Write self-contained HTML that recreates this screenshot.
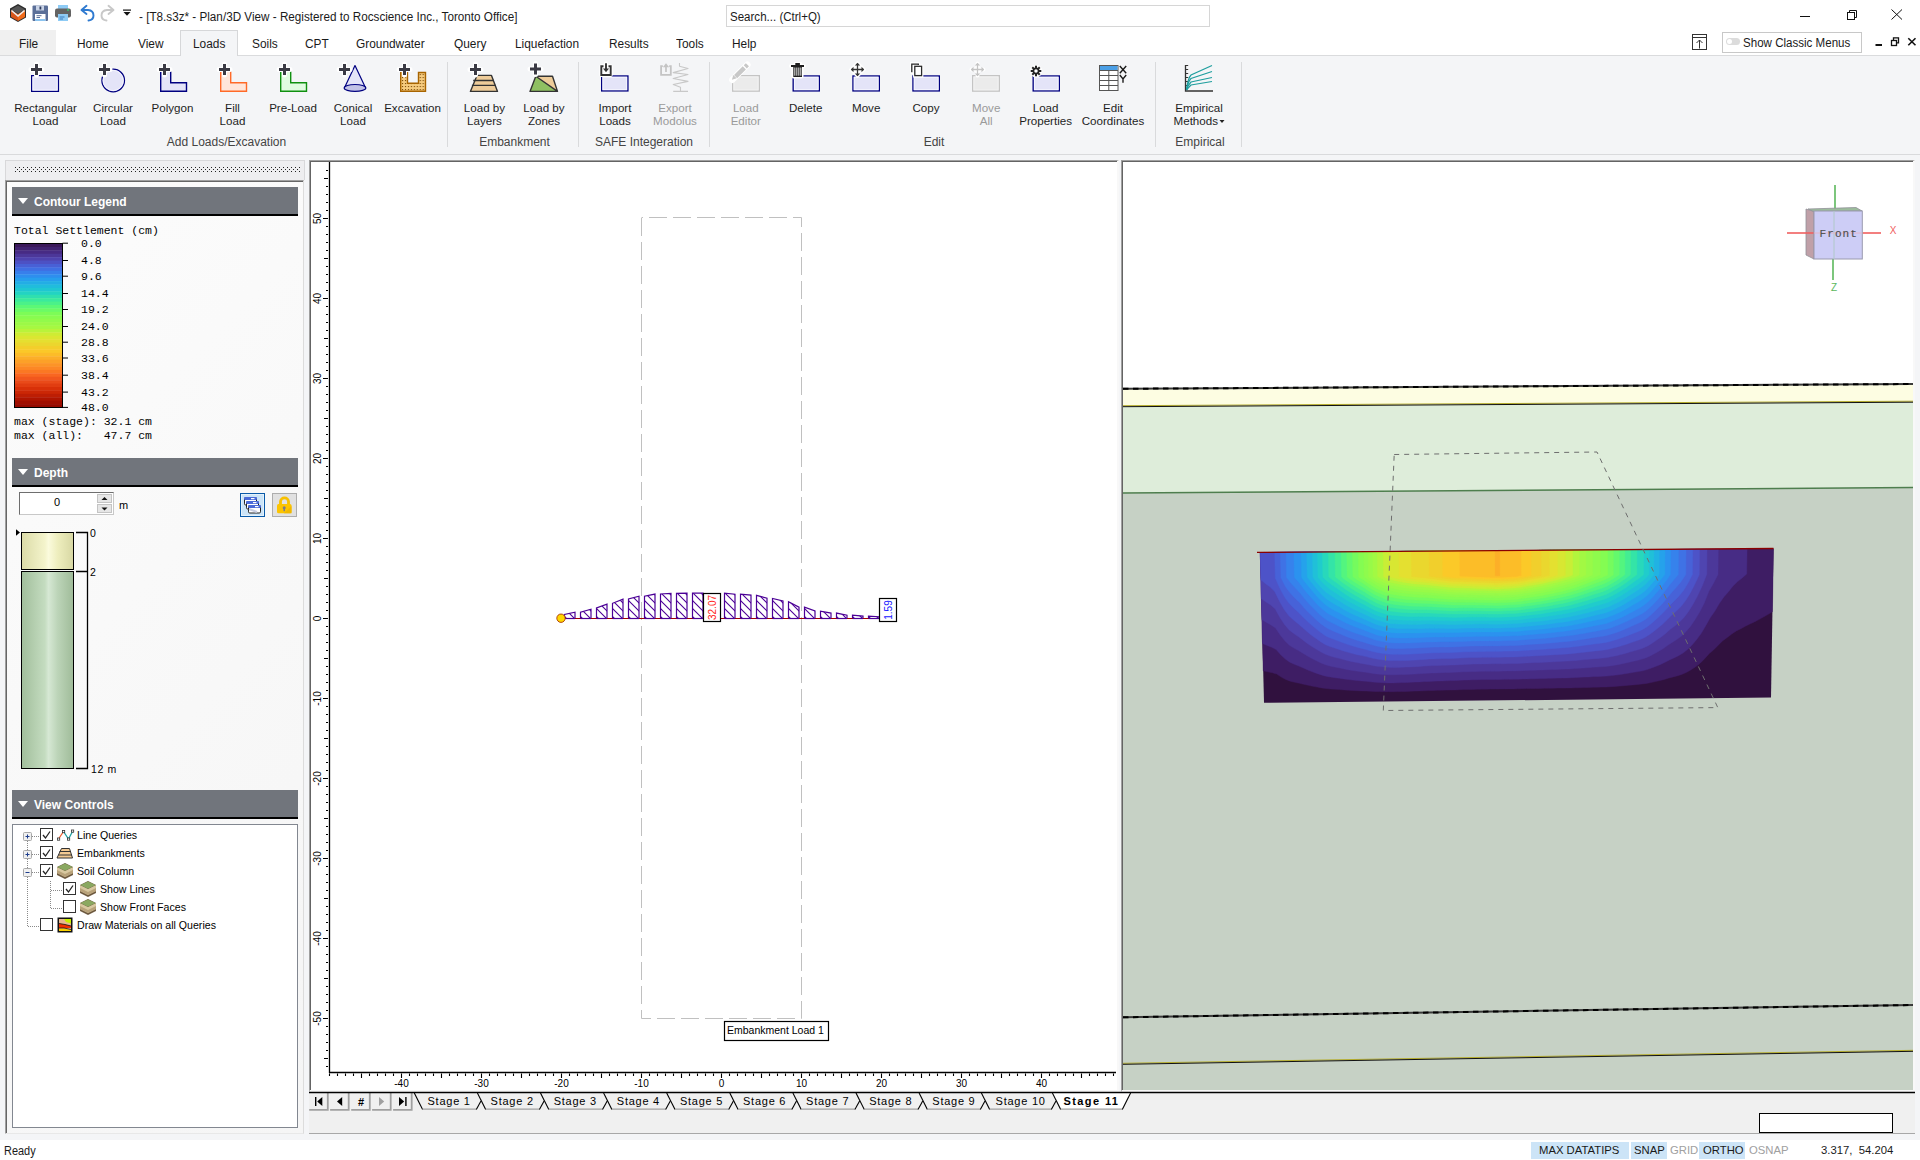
<!DOCTYPE html>
<html><head><meta charset="utf-8">
<style>
*{box-sizing:border-box}
html,body{margin:0;padding:0}
body{width:1920px;height:1160px;position:relative;overflow:hidden;background:#f4f5f7;font-family:"Liberation Sans",sans-serif;font-size:12px;color:#000}
.a{position:absolute}
.t{position:absolute;white-space:nowrap;line-height:1}
svg{position:absolute;overflow:visible}
.rb{position:absolute;text-align:center;font-size:11.6px;line-height:12.5px;color:#1e1e1e;white-space:nowrap}
.dis{color:#9a9a9a}
.gl{position:absolute;font-size:12px;color:#444;white-space:nowrap;line-height:1}
.hdr{position:absolute;left:12px;width:286px;height:29px;background:#71757c;border-bottom:2px solid #000;color:#fff;font-weight:bold;font-size:12px}
.hdr .tri{position:absolute;left:6px;top:11px;width:0;height:0;border-left:5px solid transparent;border-right:5px solid transparent;border-top:6px solid #fff}
.hdr span{position:absolute;left:22px;top:9px;line-height:1}
.mono{font-family:"Liberation Mono",monospace;font-size:11.5px}
</style></head><body>

<!-- TITLE BAR -->
<div class="a" id="title" style="left:0;top:0;width:1920px;height:30px;background:#fff">
 <svg width="140" height="30" style="left:0;top:0">
  <!-- app cube -->
  <polygon points="18,4 26,8.5 26,17.5 18,22 10,17.5 10,8.5" fill="#2b2b2b"/>
  <polygon points="18,5.5 25,9.5 18,13.5 11,9.5" fill="#555"/>
  <polygon points="11,10 18,14 18,21 11,17" fill="#d9561a"/>
  <polygon points="25,10 18,14 18,21 25,17" fill="#f06a1a"/>
  <polyline points="11.5,10.5 18,16 24.5,10.5" fill="none" stroke="#eee" stroke-width="1.6"/>
  <!-- save -->
  <rect x="32.5" y="5.5" width="15.5" height="15.5" rx="1" fill="#5b6f98"/>
  <rect x="36" y="5.5" width="8" height="5" fill="#c9d3e6"/>
  <rect x="39.5" y="6.5" width="1.8" height="3" fill="#2c3a5c"/>
  <rect x="35" y="14" width="10.5" height="7" fill="#fff"/>
  <rect x="35" y="19" width="10.5" height="2" fill="#8cc4f0"/>
  <rect x="36.5" y="15.2" width="5" height="1" fill="#5b6f98"/><rect x="36.5" y="17" width="3.5" height="1" fill="#5b6f98"/>
  <!-- printer -->
  <rect x="58" y="5" width="10" height="4" fill="#8ecbf5"/>
  <rect x="55" y="8.5" width="16" height="9" rx="2" fill="#636363"/>
  <circle cx="68" cy="10" r="0.9" fill="#36d07a"/>
  <rect x="58" y="14" width="10" height="7" fill="#8ecbf5"/>
  <rect x="59.5" y="16.5" width="5" height="1" fill="#3a7fc0"/><rect x="59.5" y="18.5" width="3.5" height="1" fill="#3a7fc0"/>
  <!-- undo -->
  <path d="M81.5,10 L86.5,5.8 M81.5,10 L86.5,14 M82,10 L88,10 Q93.5,10.5 93.5,15.5 Q93.5,20 88.5,20.5" fill="none" stroke="#2f7ad0" stroke-width="1.9" stroke-linecap="round"/>
  <!-- redo -->
  <path d="M113.5,10 L108.5,5.8 M113.5,10 L108.5,14 M113,10 L107,10 Q101.5,10.5 101.5,15.5 Q101.5,20 106.5,20.5" fill="none" stroke="#c8c8c8" stroke-width="1.9" stroke-linecap="round"/>
  <!-- qat dropdown -->
  <rect x="123" y="9.5" width="8" height="1.2" fill="#111"/>
  <polygon points="123.5,12 130.5,12 127,15.8" fill="#111"/>
 </svg>
 <div class="t" style="left:139px;top:10.5px;font-size:12.5px;color:#1a1a1a;transform:scaleX(0.936);transform-origin:0 0">- [T8.s3z* - Plan/3D View - Registered to Rocscience Inc., Toronto Office]</div>
 <div class="a" style="left:726px;top:5px;width:484px;height:22px;background:#fff;border:1px solid #d6d6d6"></div>
 <div class="t" style="left:730px;top:10.5px;font-size:12.5px;color:#1a1a1a;transform:scaleX(0.923);transform-origin:0 0">Search... (Ctrl+Q)</div>
 <svg width="120" height="30" style="left:1790px;top:0">
  <rect x="10" y="16" width="10" height="1" fill="#111"/>
  <rect x="57.5" y="12.5" width="7" height="7" fill="none" stroke="#111" stroke-width="1"/>
  <path d="M59.5,12.5 V10.5 H66.5 V17.5 H64.5" fill="none" stroke="#111" stroke-width="1"/>
  <path d="M101.5,9.5 L112,19.5 M112,9.5 L101.5,19.5" stroke="#111" stroke-width="1"/>
 </svg>
</div>
<!-- MENU BAR -->
<div class="a" id="menu" style="left:0;top:30px;width:1920px;height:26px;background:#fff;border-bottom:1px solid #dadbdd">
 <div class="a" style="left:0;top:0;width:56px;height:25px;background:#f0f0f0"></div>
 <div class="a" style="left:180px;top:0;width:58px;height:26px;background:#f4f5f7;border:1px solid #d6d7d9;border-bottom:none"></div>
 <div class="t" style="left:19px;top:7.5px;font-size:12.5px;color:#1a1a1a;transform:scaleX(0.95);transform-origin:0 0">File</div>
 <div class="t" style="left:77px;top:7.5px;font-size:12.5px;color:#1a1a1a;transform:scaleX(0.95);transform-origin:0 0">Home</div>
 <div class="t" style="left:138px;top:7.5px;font-size:12.5px;color:#1a1a1a;transform:scaleX(0.95);transform-origin:0 0">View</div>
 <div class="t" style="left:193px;top:7.5px;font-size:12.5px;color:#1a1a1a;transform:scaleX(0.95);transform-origin:0 0">Loads</div>
 <div class="t" style="left:252px;top:7.5px;font-size:12.5px;color:#1a1a1a;transform:scaleX(0.95);transform-origin:0 0">Soils</div>
 <div class="t" style="left:305px;top:7.5px;font-size:12.5px;color:#1a1a1a;transform:scaleX(0.95);transform-origin:0 0">CPT</div>
 <div class="t" style="left:356px;top:7.5px;font-size:12.5px;color:#1a1a1a;transform:scaleX(0.95);transform-origin:0 0">Groundwater</div>
 <div class="t" style="left:454px;top:7.5px;font-size:12.5px;color:#1a1a1a;transform:scaleX(0.95);transform-origin:0 0">Query</div>
 <div class="t" style="left:515px;top:7.5px;font-size:12.5px;color:#1a1a1a;transform:scaleX(0.95);transform-origin:0 0">Liquefaction</div>
 <div class="t" style="left:609px;top:7.5px;font-size:12.5px;color:#1a1a1a;transform:scaleX(0.95);transform-origin:0 0">Results</div>
 <div class="t" style="left:676px;top:7.5px;font-size:12.5px;color:#1a1a1a;transform:scaleX(0.95);transform-origin:0 0">Tools</div>
 <div class="t" style="left:732px;top:7.5px;font-size:12.5px;color:#1a1a1a;transform:scaleX(0.95);transform-origin:0 0">Help</div>
 <svg width="30" height="25" style="left:1690px;top:0">
  <rect x="2.5" y="4.5" width="14" height="15" fill="none" stroke="#333" stroke-width="1"/>
  <line x1="2.5" y1="7.5" x2="16.5" y2="7.5" stroke="#333" stroke-width="1"/>
  <path d="M9.5,18.5 V10 M6.5,13 L9.5,10 L12.5,13" fill="none" stroke="#333" stroke-width="1"/>
 </svg>
 <div class="a" style="left:1722px;top:2px;width:140px;height:21px;background:#fff;border:1px solid #c8c8c8"></div>
 <div class="a" style="left:1726px;top:8px;width:14px;height:7px;border-radius:4px;background:#dcdcdc"></div>
 <div class="a" style="left:1727px;top:9px;width:5px;height:5px;border-radius:3px;background:#fff"></div>
 <div class="t" style="left:1743px;top:6.5px;font-size:12.5px;color:#1a1a1a;transform:scaleX(0.925);transform-origin:0 0">Show Classic Menus</div>
 <svg width="50" height="25" style="left:1870px;top:0">
  <rect x="5.5" y="14" width="6.5" height="2" fill="#111"/>
  <rect x="21.5" y="10.5" width="5" height="5" fill="none" stroke="#111" stroke-width="1.3"/>
  <path d="M23.5,10 V7.8 H28.5 V12.8 H27" fill="none" stroke="#111" stroke-width="1.3"/>
  <path d="M38.3,8.3 L45.5,15.3 M45.5,8.3 L38.3,15.3" stroke="#111" stroke-width="1.6"/>
 </svg>
</div>
<!-- RIBBON -->
<div class="a" id="ribbon" style="left:0;top:56px;width:1920px;height:99px;background:#f4f5f7;border-bottom:1px solid #d9dadc"></div>
<svg id="ribsvg" width="1920" height="160" style="left:0;top:0"><rect x="31.7" y="75.7" width="26.700000000000003" height="15.6" fill="#e4e4f8" stroke="#000080" stroke-width="1.4"/><rect x="32.9" y="76.9" width="24.3" height="13.2" fill="none" stroke="#f6f6fe" stroke-width="1"/><path d="M31.0,69.5 H42.0 M36.5,64.0 V75.0" fill="none" stroke="#fff" stroke-linejoin="round" stroke-linecap="round" stroke-width="5"/><path d="M31.0,69.5 H42.0 M36.5,64.0 V75.0" fill="none" stroke="#3a3a44" stroke-width="3"/>
<circle cx="113.2" cy="80.5" r="11.3" fill="#e4e4f8" stroke="#000080" stroke-width="1.25"/><circle cx="113.2" cy="80.5" r="10.1" fill="none" stroke="#f6f6fe" stroke-width="0.9"/><path d="M99.0,69.5 H110.0 M104.5,64.0 V75.0" fill="none" stroke="#fff" stroke-linejoin="round" stroke-linecap="round" stroke-width="5"/><path d="M99.0,69.5 H110.0 M104.5,64.0 V75.0" fill="none" stroke="#3a3a44" stroke-width="3"/>
<path d="M160.7,70.5 V91.3 H186.5 V82.7 H170.7 V70.5 Z" fill="#e4e4f8" stroke="#000080" stroke-width="1.4" stroke-linejoin="miter"/><path d="M159.0,69.5 H170.0 M164.5,64.0 V75.0" fill="none" stroke="#fff" stroke-linejoin="round" stroke-linecap="round" stroke-width="5"/><path d="M159.0,69.5 H170.0 M164.5,64.0 V75.0" fill="none" stroke="#3a3a44" stroke-width="3"/>
<path d="M220.7,70.5 V91.3 H246.5 V82.7 H230.7 V70.5 Z" fill="#ffe6da" stroke="#ff6a28" stroke-width="1.4" stroke-linejoin="miter"/><path d="M219.0,69.5 H230.0 M224.5,64.0 V75.0" fill="none" stroke="#fff" stroke-linejoin="round" stroke-linecap="round" stroke-width="5"/><path d="M219.0,69.5 H230.0 M224.5,64.0 V75.0" fill="none" stroke="#3a3a44" stroke-width="3"/>
<path d="M280.7,70.5 V91.3 H306.5 V82.7 H290.7 V70.5 Z" fill="#e0fce0" stroke="#109010" stroke-width="1.4" stroke-linejoin="miter"/><path d="M279.0,69.5 H290.0 M284.5,64.0 V75.0" fill="none" stroke="#fff" stroke-linejoin="round" stroke-linecap="round" stroke-width="5"/><path d="M279.0,69.5 H290.0 M284.5,64.0 V75.0" fill="none" stroke="#3a3a44" stroke-width="3"/>
<path d="M355,65.5 L344.6,87.5 L365.4,87.5 Z" fill="#e4e4f8" stroke="#000080" stroke-width="1.2" stroke-linejoin="round"/><ellipse cx="355" cy="87.9" rx="10.8" ry="3.4" fill="#c2c2e6" stroke="#000080" stroke-width="1.2"/><path d="M339.0,69.5 H350.0 M344.5,64.0 V75.0" fill="none" stroke="#fff" stroke-linejoin="round" stroke-linecap="round" stroke-width="5"/><path d="M339.0,69.5 H350.0 M344.5,64.0 V75.0" fill="none" stroke="#3a3a44" stroke-width="3"/>
<defs><pattern id="dots" x="401" y="73" width="2.95" height="3" patternUnits="userSpaceOnUse"><rect width="3" height="3" fill="#f6cb7e"/><rect x="1" y="1" width="1.1" height="1.1" fill="#7a4a08"/></pattern></defs><path d="M400.7,70.5 V91.3 H425.5 V72.5 H418.5 V83.2 H407.5 V70.5 Z" fill="url(#dots)" stroke="#a86400" stroke-width="1.4"/><path d="M399.0,69.5 H410.0 M404.5,64.0 V75.0" fill="none" stroke="#fff" stroke-linejoin="round" stroke-linecap="round" stroke-width="5"/><path d="M399.0,69.5 H410.0 M404.5,64.0 V75.0" fill="none" stroke="#3a3a44" stroke-width="3"/>
<line x1="447.5" y1="62" x2="447.5" y2="147" stroke="#d9dadc" stroke-width="1"/>
<line x1="578.5" y1="62" x2="578.5" y2="147" stroke="#d9dadc" stroke-width="1"/>
<line x1="709.5" y1="62" x2="709.5" y2="147" stroke="#d9dadc" stroke-width="1"/>
<line x1="1155.5" y1="62" x2="1155.5" y2="147" stroke="#d9dadc" stroke-width="1"/>
<line x1="1241.5" y1="62" x2="1241.5" y2="147" stroke="#d9dadc" stroke-width="1"/>
<path d="M477,75.4 H491.5 L497.5,91.4 H470.4 Z" fill="#eecc9a" stroke="#333" stroke-width="1.4" stroke-linejoin="round"/><path d="M473.2,80.5 H494 M471.9,85.4 H495.8" stroke="#333" stroke-width="1.4"/><path d="M470.0,69.5 H481.0 M475.5,64.0 V75.0" fill="none" stroke="#fff" stroke-linejoin="round" stroke-linecap="round" stroke-width="5"/><path d="M470.0,69.5 H481.0 M475.5,64.0 V75.0" fill="none" stroke="#3a3a44" stroke-width="3"/>
<path d="M535.8,76.2 L557.5,91.4 H530 Z" fill="#8fc062"/><path d="M535.8,76.2 H552.5 L557.5,91.4 Z" fill="#eecc9a"/><path d="M535.8,76.2 H552.5 L557.5,91.4 H530 Z M535.8,76.2 L557.5,91.4" fill="none" stroke="#333" stroke-width="1.4" stroke-linejoin="round"/><path d="M530.0,69 H541.0 M535.5,63.5 V74.5" fill="none" stroke="#fff" stroke-linejoin="round" stroke-linecap="round" stroke-width="5"/><path d="M530.0,69 H541.0 M535.5,63.5 V74.5" fill="none" stroke="#3a3a44" stroke-width="3"/>
<rect x="601.7" y="76.0" width="26.200000000000024" height="14.899999999999997" fill="#e4e4f8" stroke="#000080" stroke-width="1.4"/><rect x="602.9" y="77.2" width="23.800000000000022" height="12.499999999999996" fill="none" stroke="#f6f6fe" stroke-width="1"/><path d="M603.5,66.3 H601.3 V75 H610.7 V66.3 H608.5 M606,63.2 V72" fill="none" stroke="#fff" stroke-width="4" stroke-linejoin="round" stroke-linecap="round"/><path d="M603.5,66.3 H601.3 V75 H610.7 V66.3 H608.5" fill="none" stroke="#333" stroke-width="1.9"/><path d="M606,63.2 V69.5" stroke="#333" stroke-width="1.9"/><path d="M603,68.5 H609 L606,72.3 Z" fill="#333"/>
<path d="M662.8,66.1 H661.1 V74.8 H670.8 V66.1 H669.2" fill="none" stroke="#c4c4c4" stroke-width="1.8"/><path d="M666,72 V66" fill="none" stroke="#c4c4c4" stroke-width="1.7"/><polygon points="662.8,67.3 669.2,67.3 666,63.3" fill="#c4c4c4"/>
<path d="M679.5,63 V66.3 L688,68.5 L673.2,72.6 L688,74.5 L673.2,78.5 L688,81.4 L673.2,84.5 L680.5,87.2 V91.4 M673.2,91.4 H688" fill="none" stroke="#c8c8c8" stroke-width="1.1" stroke-linejoin="round"/>
<rect x="732.7" y="75.7" width="26.6" height="15.399999999999997" fill="#ebebeb" stroke="#c4c4c4" stroke-width="1.4"/><rect x="733.9" y="76.9" width="24.2" height="12.999999999999996" fill="none" stroke="#f2f2f2" stroke-width="1"/>
<path d="M732.3,79.8 L747.4,64.7" fill="none" stroke="#fff" stroke-width="6.4" stroke-linecap="round"/><path d="M735.6,76.6 L744.3,67.9" stroke="#c8c8c8" stroke-width="4.4"/><path d="M745.3,66.9 L747.4,64.8" stroke="#c8c8c8" stroke-width="4.4"/><polygon points="731.9,79.7 733.3,74.9 736.7,78.3" fill="#c8c8c8"/>
<rect x="793.2" y="76.0" width="26.1" height="14.899999999999997" fill="#e4e4f8" stroke="#000080" stroke-width="1.4"/><rect x="794.4" y="77.2" width="23.7" height="12.499999999999996" fill="none" stroke="#f6f6fe" stroke-width="1"/>
<path d="M791,66 H804 M795.5,64 H800.5 V66 M793.5,67 V76.5 H801.5 V67" fill="none" stroke="#fff" stroke-width="4" stroke-linejoin="round" stroke-linecap="round"/>
<rect x="791" y="65" width="13" height="2" fill="#1e1e1e"/><rect x="795.3" y="63" width="4.6" height="2" fill="#1e1e1e"/><rect x="793.3" y="67" width="8.7" height="10" fill="#1e1e1e"/>
<rect x="794.4" y="67.5" width="0.9" height="8.2" fill="#fff"/><rect x="796.4" y="67.5" width="0.9" height="8.2" fill="#fff"/><rect x="798.4" y="67.5" width="0.9" height="8.2" fill="#fff"/><rect x="800.4" y="67.5" width="0.9" height="8.2" fill="#fff"/>
<rect x="853.0" y="76.0" width="26.300000000000047" height="14.899999999999997" fill="#e4e4f8" stroke="#000080" stroke-width="1.4"/><rect x="854.1999999999999" y="77.2" width="23.900000000000045" height="12.499999999999996" fill="none" stroke="#f6f6fe" stroke-width="1"/><path d="M851.5,69.5 H863.5 M857.5,63.5 V75.5" fill="none" stroke="#fff" stroke-width="4" stroke-linecap="round"/><path d="M849.8,69.5 L853.5,65.8 V73.2 Z M865.2,69.5 L861.5,65.8 V73.2 Z M857.5,61.8 L853.8,65.5 H861.2 Z M857.5,77.2 L853.8,73.5 H861.2 Z" fill="#fff" stroke="#fff" stroke-width="1.5"/><path d="M851.5,69.5 H863.5 M857.5,63.5 V75.5" stroke="#333" stroke-width="1.3"/><path d="M850.8,69.5 L853.5,66.8 V72.2 Z M864.2,69.5 L861.5,66.8 V72.2 Z M857.5,62.8 L854.8,65.5 H860.2 Z M857.5,76.2 L854.8,73.5 H860.2 Z" fill="#333"/>
<rect x="913.0" y="76.0" width="26.300000000000047" height="14.899999999999997" fill="#e4e4f8" stroke="#000080" stroke-width="1.4"/><rect x="914.1999999999999" y="77.2" width="23.900000000000045" height="12.499999999999996" fill="none" stroke="#f6f6fe" stroke-width="1"/>
<path d="M911.7,72.5 V63.8 H918.5" fill="none" stroke="#fff" stroke-width="3.5" stroke-linecap="round"/><rect x="914.8" y="66.5" width="6.8" height="9.3" fill="#fff" stroke="#fff" stroke-width="3.5"/>
<path d="M911.8,72.2 V64.2 H918.3 V65" fill="none" stroke="#2a2a2a" stroke-width="1.3"/><rect x="914.8" y="66.3" width="6.8" height="9.3" fill="#fff" stroke="#2a2a2a" stroke-width="1.3"/>
<rect x="972.7" y="75.7" width="26.6" height="15.399999999999997" fill="#ebebeb" stroke="#c4c4c4" stroke-width="1.4"/><rect x="973.9" y="76.9" width="24.2" height="12.999999999999996" fill="none" stroke="#f2f2f2" stroke-width="1"/>
<path d="M971.5,69.5 H983.5 M977.5,63.5 V75.5" fill="none" stroke="#fff" stroke-width="4" stroke-linecap="round"/><path d="M971.5,69.5 H983.5 M977.5,63.5 V75.5" stroke="#c4c4c4" stroke-width="1.3"/><path d="M970.8,69.5 L973.5,66.8 V72.2 Z M984.2,69.5 L981.5,66.8 V72.2 Z M977.5,62.8 L974.8,65.5 H980.2 Z M977.5,76.2 L974.8,73.5 H980.2 Z" fill="#c4c4c4"/>
<rect x="1033.2" y="76.0" width="26.1" height="14.899999999999997" fill="#e4e4f8" stroke="#000080" stroke-width="1.4"/><rect x="1034.4" y="77.2" width="23.7" height="12.499999999999996" fill="none" stroke="#f6f6fe" stroke-width="1"/>
<circle cx="1036" cy="71" r="6.3" fill="#fff"/>
<g transform="translate(1036,71)"><circle r="2.6" fill="#fff" stroke="#222" stroke-width="1.7"/><rect x="-1" y="-5.3" width="2" height="2.3" fill="#222" transform="rotate(0)"/><rect x="-1" y="-5.3" width="2" height="2.3" fill="#222" transform="rotate(45)"/><rect x="-1" y="-5.3" width="2" height="2.3" fill="#222" transform="rotate(90)"/><rect x="-1" y="-5.3" width="2" height="2.3" fill="#222" transform="rotate(135)"/><rect x="-1" y="-5.3" width="2" height="2.3" fill="#222" transform="rotate(180)"/><rect x="-1" y="-5.3" width="2" height="2.3" fill="#222" transform="rotate(225)"/><rect x="-1" y="-5.3" width="2" height="2.3" fill="#222" transform="rotate(270)"/><rect x="-1" y="-5.3" width="2" height="2.3" fill="#222" transform="rotate(315)"/></g>
<rect x="1099.5" y="65.5" width="18.5" height="25" fill="#fff" stroke="#555" stroke-width="1"/><rect x="1100" y="66" width="17.5" height="4.5" fill="#4a9fe6"/><line x1="1099.5" y1="70.5" x2="1118" y2="70.5" stroke="#555" stroke-width="1"/><line x1="1099.5" y1="75.5" x2="1118" y2="75.5" stroke="#555" stroke-width="1"/><line x1="1099.5" y1="80.5" x2="1118" y2="80.5" stroke="#555" stroke-width="1"/><line x1="1099.5" y1="85.5" x2="1118" y2="85.5" stroke="#555" stroke-width="1"/><line x1="1108.8" y1="70.5" x2="1108.8" y2="90.5" stroke="#555" stroke-width="1"/><path d="M1119.8,66 L1126.2,73.3 M1126.2,66 L1119.8,73.3 M1119.8,75 L1123,79 L1126.2,75 M1123,79 V82.8" fill="none" stroke="#1a1a1a" stroke-width="1.4"/>
<path d="M1185.5,65 V91 H1213" fill="none" stroke="#333" stroke-width="1.3"/><line x1="1185.5" y1="65.5" x2="1188.2" y2="65.5" stroke="#333" stroke-width="1"/><line x1="1185.5" y1="69.5" x2="1188.2" y2="69.5" stroke="#333" stroke-width="1"/><line x1="1185.5" y1="73.5" x2="1188.2" y2="73.5" stroke="#333" stroke-width="1"/><line x1="1185.5" y1="77.5" x2="1188.2" y2="77.5" stroke="#333" stroke-width="1"/><line x1="1185.5" y1="81.5" x2="1188.2" y2="81.5" stroke="#333" stroke-width="1"/><line x1="1185.5" y1="85.5" x2="1188.2" y2="85.5" stroke="#333" stroke-width="1"/><path d="M1186.5,90 Q1188,78 1191,75 L1212,65.5" fill="none" stroke="#1e9e9e" stroke-width="1.2"/><path d="M1186.5,90 Q1188,81.5 1191,78.5 L1212,71.5" fill="none" stroke="#1e9e9e" stroke-width="1.2"/><path d="M1186.5,90 Q1188,85 1191,82 L1212,77.5" fill="none" stroke="#1e9e9e" stroke-width="1.2"/><path d="M1186.5,90 Q1188,88 1191,85 L1212,81.5" fill="none" stroke="#1e9e9e" stroke-width="1.2"/>
<polygon points="1219.5,120 1224.5,120 1222,123" fill="#222"/></svg>
<div class="rb" style="left:-4.5px;top:102px;width:100px">Rectangular<br>Load</div>
<div class="rb" style="left:63px;top:102px;width:100px">Circular<br>Load</div>
<div class="rb" style="left:122.5px;top:102px;width:100px">Polygon</div>
<div class="rb" style="left:182.5px;top:102px;width:100px">Fill<br>Load</div>
<div class="rb" style="left:243px;top:102px;width:100px">Pre-Load</div>
<div class="rb" style="left:303px;top:102px;width:100px">Conical<br>Load</div>
<div class="rb" style="left:362.5px;top:102px;width:100px">Excavation</div>
<div class="rb" style="left:434.5px;top:102px;width:100px">Load by<br>Layers</div>
<div class="rb" style="left:494px;top:102px;width:100px">Load by<br>Zones</div>
<div class="rb" style="left:565px;top:102px;width:100px">Import<br>Loads</div>
<div class="rb dis" style="left:625px;top:102px;width:100px">Export<br>Modolus</div>
<div class="rb dis" style="left:695.8px;top:102px;width:100px">Load<br>Editor</div>
<div class="rb" style="left:755.7px;top:102px;width:100px">Delete</div>
<div class="rb" style="left:816.2px;top:102px;width:100px">Move</div>
<div class="rb" style="left:876px;top:102px;width:100px">Copy</div>
<div class="rb dis" style="left:936.2px;top:102px;width:100px">Move<br>All</div>
<div class="rb" style="left:995.5999999999999px;top:102px;width:100px">Load<br>Properties</div>
<div class="rb" style="left:1063px;top:102px;width:100px">Edit<br>Coordinates</div>
<div class="rb" style="left:1149px;top:102px;width:100px">Empirical<br>Methods&nbsp;&nbsp;</div>
<div class="gl" style="top:136px;left:146.5px;width:160px;text-align:center">Add Loads/Excavation</div><div class="gl" style="top:136px;left:434.5px;width:160px;text-align:center">Embankment</div><div class="gl" style="top:136px;left:564px;width:160px;text-align:center">SAFE Integeration</div><div class="gl" style="top:136px;left:854px;width:160px;text-align:center">Edit</div><div class="gl" style="top:136px;left:1120px;width:160px;text-align:center">Empirical</div>

<!-- LEFT PANEL -->
<div class="a" style="left:5px;top:160px;width:300px;height:20px;background:#eeeef0;border-top:1px solid #d8d8da;border-left:1px solid #d8d8da;border-right:1px solid #d8d8da"></div>
<svg width="300" height="10" style="left:0;top:165px"><defs><pattern id="grip" x="15" y="2" width="4" height="4" patternUnits="userSpaceOnUse"><rect x="0" y="0" width="1" height="1" fill="#222"/><rect x="2" y="2" width="1" height="1" fill="#222"/></pattern></defs><rect x="15" y="2" width="286" height="5" fill="url(#grip)"/></svg>
<div class="a" style="left:5px;top:180px;width:299px;height:954px;background:linear-gradient(135deg,#fcfcfc,#f5f5f5);border-top:1px solid #a0a0a0;border-left:1px solid #a0a0a0;border-right:1px solid #dcdcdc;border-bottom:1px solid #e8e8e8;box-shadow:inset 1px 1px 0 #666"></div>
<div class="hdr" style="top:187px"><div class="tri"></div><span>Contour Legend</span></div>
<div class="t mono" style="left:14px;top:225px">Total Settlement (cm)</div>
<svg width="100" height="180" style="left:0;top:235px"><rect x="14.5" y="8.50" width="48" height="3.82" fill="#3b195a"/><rect x="14.5" y="11.92" width="48" height="3.82" fill="#41226f"/><rect x="14.5" y="15.33" width="48" height="3.82" fill="#472b84"/><rect x="14.5" y="18.75" width="48" height="3.82" fill="#4c3799"/><rect x="14.5" y="22.17" width="48" height="3.82" fill="#4f43ae"/><rect x="14.5" y="25.58" width="48" height="3.82" fill="#4d51c4"/><rect x="14.5" y="29.00" width="48" height="3.82" fill="#4860d6"/><rect x="14.5" y="32.42" width="48" height="3.82" fill="#406fe3"/><rect x="14.5" y="35.83" width="48" height="3.82" fill="#387feb"/><rect x="14.5" y="39.25" width="48" height="3.82" fill="#2e8eee"/><rect x="14.5" y="42.67" width="48" height="3.82" fill="#279eed"/><rect x="14.5" y="46.08" width="48" height="3.82" fill="#23ade5"/><rect x="14.5" y="49.50" width="48" height="3.82" fill="#20bcdc"/><rect x="14.5" y="52.92" width="48" height="3.82" fill="#20c7d1"/><rect x="14.5" y="56.33" width="48" height="3.82" fill="#23d3c3"/><rect x="14.5" y="59.75" width="48" height="3.82" fill="#2fdfaf"/><rect x="14.5" y="63.17" width="48" height="3.82" fill="#3bea9c"/><rect x="14.5" y="66.58" width="48" height="3.82" fill="#4bf189"/><rect x="14.5" y="70.00" width="48" height="3.82" fill="#5bf876"/><rect x="14.5" y="73.42" width="48" height="3.82" fill="#6cfa66"/><rect x="14.5" y="76.83" width="48" height="3.82" fill="#7dfc57"/><rect x="14.5" y="80.25" width="48" height="3.82" fill="#88fb50"/><rect x="14.5" y="83.67" width="48" height="3.82" fill="#92fa4b"/><rect x="14.5" y="87.08" width="48" height="3.82" fill="#9cf946"/><rect x="14.5" y="90.50" width="48" height="3.82" fill="#a6f841"/><rect x="14.5" y="93.92" width="48" height="3.82" fill="#b9f33b"/><rect x="14.5" y="97.33" width="48" height="3.82" fill="#ceec34"/><rect x="14.5" y="100.75" width="48" height="3.82" fill="#dbe632"/><rect x="14.5" y="104.17" width="48" height="3.82" fill="#e5df30"/><rect x="14.5" y="107.58" width="48" height="3.82" fill="#ebd62e"/><rect x="14.5" y="111.00" width="48" height="3.82" fill="#f3ce2b"/><rect x="14.5" y="114.42" width="48" height="3.82" fill="#fbc828"/><rect x="14.5" y="117.83" width="48" height="3.82" fill="#fcbc28"/><rect x="14.5" y="121.25" width="48" height="3.82" fill="#fcae28"/><rect x="14.5" y="124.67" width="48" height="3.82" fill="#fca128"/><rect x="14.5" y="128.08" width="48" height="3.82" fill="#fc9427"/><rect x="14.5" y="131.50" width="48" height="3.82" fill="#fc8725"/><rect x="14.5" y="134.92" width="48" height="3.82" fill="#fb7823"/><rect x="14.5" y="138.33" width="48" height="3.82" fill="#f96621"/><rect x="14.5" y="141.75" width="48" height="3.82" fill="#f2571d"/><rect x="14.5" y="145.17" width="48" height="3.82" fill="#e94a19"/><rect x="14.5" y="148.58" width="48" height="3.82" fill="#e13d11"/><rect x="14.5" y="152.00" width="48" height="3.82" fill="#d83008"/><rect x="14.5" y="155.42" width="48" height="3.82" fill="#cb2706"/><rect x="14.5" y="158.83" width="48" height="3.82" fill="#bd1e04"/><rect x="14.5" y="162.25" width="48" height="3.82" fill="#ae1501"/><rect x="14.5" y="165.67" width="48" height="3.82" fill="#a00e00"/><rect x="14.5" y="169.08" width="48" height="3.82" fill="#950a00"/><rect x="14.5" y="8.5" width="48" height="164.0" fill="none" stroke="#000" stroke-width="1"/><line x1="62.5" y1="8.2" x2="68" y2="8.2" stroke="#000" stroke-width="1"/><line x1="62.5" y1="25.5" x2="68" y2="25.5" stroke="#000" stroke-width="1"/><line x1="62.5" y1="41.2" x2="68" y2="41.2" stroke="#000" stroke-width="1"/><line x1="62.5" y1="58.5" x2="68" y2="58.5" stroke="#000" stroke-width="1"/><line x1="62.5" y1="74.5" x2="68" y2="74.5" stroke="#000" stroke-width="1"/><line x1="62.5" y1="91.5" x2="68" y2="91.5" stroke="#000" stroke-width="1"/><line x1="62.5" y1="107.2" x2="68" y2="107.2" stroke="#000" stroke-width="1"/><line x1="62.5" y1="123.0" x2="68" y2="123.0" stroke="#000" stroke-width="1"/><line x1="62.5" y1="140.2" x2="68" y2="140.2" stroke="#000" stroke-width="1"/><line x1="62.5" y1="157.1" x2="68" y2="157.1" stroke="#000" stroke-width="1"/><line x1="62.5" y1="172.4" x2="68" y2="172.4" stroke="#000" stroke-width="1"/></svg>
<div class="t mono" style="left:81px;top:238.0px">0.0</div>
<div class="t mono" style="left:81px;top:255.3px">4.8</div>
<div class="t mono" style="left:81px;top:271.0px">9.6</div>
<div class="t mono" style="left:81px;top:288.3px">14.4</div>
<div class="t mono" style="left:81px;top:304.3px">19.2</div>
<div class="t mono" style="left:81px;top:321.3px">24.0</div>
<div class="t mono" style="left:81px;top:337.0px">28.8</div>
<div class="t mono" style="left:81px;top:352.8px">33.6</div>
<div class="t mono" style="left:81px;top:370.0px">38.4</div>
<div class="t mono" style="left:81px;top:386.9px">43.2</div>
<div class="t mono" style="left:81px;top:402.2px">48.0</div>
<div class="t mono" style="left:14px;top:415.5px;white-space:pre">max (stage): 32.1 cm</div>
<div class="t mono" style="left:14px;top:429.5px;white-space:pre">max (all):   47.7 cm</div>
<div class="hdr" style="top:458px"><div class="tri"></div><span>Depth</span></div>
<div class="a" style="left:19px;top:492px;width:95px;height:23px;background:#fff;border-top:1px solid #6e6e6e;border-left:1px solid #6e6e6e;border-right:1px solid #c8c8c8;border-bottom:1px solid #c8c8c8"></div>
<div class="t" style="left:54px;top:497px;font-size:11px">0</div>
<div class="a" style="left:97px;top:494px;width:15px;height:9px;background:#e6e6e6;border:1px solid #c4c4c4"></div>
<div class="a" style="left:97px;top:504px;width:15px;height:9px;background:#e6e6e6;border:1px solid #c4c4c4"></div>
<svg width="20" height="20" style="left:97px;top:494px"><polygon points="4.5,6 10.5,6 7.5,3" fill="#111"/><polygon points="4.5,13.5 10.5,13.5 7.5,16.5" fill="#111"/></svg>
<div class="t" style="left:119px;top:500px;font-size:11px">m</div>
<div class="a" style="left:240px;top:493px;width:25px;height:24px;background:#cce4f7;border:1.3px solid #0a5aa8;box-shadow:inset 0 0 0 1px #e4f2fc"></div><svg width="26" height="24" style="left:240px;top:493px"><rect x="4.5" y="4.5" width="12" height="7.5" rx="1.2" fill="#fff" stroke="#222" stroke-width="1"/><rect x="4" y="4" width="13" height="3" rx="1.2" fill="#4a6ad8"/><rect x="11" y="5" width="3.5" height="1.2" fill="#fff"/><rect x="6.5" y="8.5" width="12" height="7.5" rx="1.2" fill="#fff" stroke="#222" stroke-width="1"/><rect x="6" y="8" width="13" height="3" rx="1.2" fill="#4a6ad8"/><rect x="13" y="9" width="3.5" height="1.2" fill="#fff"/><rect x="8.5" y="12.5" width="12" height="7.5" rx="1.2" fill="#fff" stroke="#222" stroke-width="1"/><rect x="8" y="12" width="13" height="3" rx="1.2" fill="#4a6ad8"/><rect x="15" y="13" width="3.5" height="1.2" fill="#fff"/><path d="M9,16 L17,19" stroke="#c8cce0" stroke-width="2"/></svg><div class="a" style="left:272px;top:493px;width:25px;height:24px;background:#e1e1e1;border:1.3px solid #adadad"></div><svg width="25" height="24" style="left:272px;top:493px"><path d="M8.5,11.5 V8.5 A4,3.6 0 0 1 16.5,8.5 V11.5" fill="none" stroke="#f8c000" stroke-width="2.8"/><rect x="5" y="11" width="14.5" height="9.2" rx="1.5" fill="#fcc400"/><path d="M12,20.2 L19.5,13 V20.2 Z" fill="#f0b800"/><circle cx="12.2" cy="14.8" r="1.5" fill="#7a7a90"/><rect x="11.5" y="15" width="1.5" height="3.2" fill="#7a7a90"/></svg>
<div class="a" style="left:21px;top:532px;width:53px;height:38px;border:1.5px solid #000;background:linear-gradient(90deg,#dcdca8,#f4f4cc 45%,#fbfbdd 52%,#eeeebe 70%,#d8d8a4)"></div>
<div class="a" style="left:21px;top:571px;width:53px;height:198px;border:1.5px solid #000;background:linear-gradient(90deg,#a2bf9c,#c4dcc0 45%,#d6e8d4 52%,#bcd4b8 70%,#a0bc9a)"></div>
<svg width="40" height="250" style="left:70px;top:525px"><path d="M6,7.5 H17.5 V243.5 H6 M6,46.5 H17.5" fill="none" stroke="#000" stroke-width="1.3"/></svg>
<svg width="10" height="10" style="left:14px;top:527px"><polygon points="2,2.3 6,5.5 2,8.7" fill="#000"/></svg>
<div class="t" style="left:90px;top:527.5px;font-size:10.5px">0</div>
<div class="t" style="left:90px;top:566.5px;font-size:10.5px">2</div>
<div class="t" style="left:91px;top:763.5px;font-size:10.5px;letter-spacing:0.6px">12 m</div>
<div class="hdr" style="top:790px"><div class="tri"></div><span>View Controls</span></div>
<div class="a" style="left:12px;top:824px;width:286px;height:304px;background:#fff;border:1px solid #828790"></div>
<svg width="300" height="120" style="left:0;top:820px"><line x1="27.5" y1="21" x2="27.5" y2="107" stroke="#8a8a8a" stroke-width="1" stroke-dasharray="1,1"/><line x1="50.5" y1="61" x2="50.5" y2="89" stroke="#8a8a8a" stroke-width="1" stroke-dasharray="1,1"/><line x1="32" y1="16.5" x2="40" y2="16.5" stroke="#8a8a8a" stroke-width="1" stroke-dasharray="1,1"/><line x1="32" y1="34.5" x2="40" y2="34.5" stroke="#8a8a8a" stroke-width="1" stroke-dasharray="1,1"/><line x1="32" y1="52.5" x2="40" y2="52.5" stroke="#8a8a8a" stroke-width="1" stroke-dasharray="1,1"/><line x1="51" y1="70.5" x2="63" y2="70.5" stroke="#8a8a8a" stroke-width="1" stroke-dasharray="1,1"/><line x1="51" y1="88.5" x2="63" y2="88.5" stroke="#8a8a8a" stroke-width="1" stroke-dasharray="1,1"/><line x1="28" y1="106.5" x2="40" y2="106.5" stroke="#8a8a8a" stroke-width="1" stroke-dasharray="1,1"/><rect x="23.5" y="12.5" width="8" height="8" rx="1" fill="#f0f0f0" stroke="#a8a8a8"/><line x1="25.5" y1="16.5" x2="29.5" y2="16.5" stroke="#1c3c8c" stroke-width="1"/><line x1="27.5" y1="14.5" x2="27.5" y2="18.5" stroke="#1c3c8c" stroke-width="1"/><rect x="23.5" y="30.5" width="8" height="8" rx="1" fill="#f0f0f0" stroke="#a8a8a8"/><line x1="25.5" y1="34.5" x2="29.5" y2="34.5" stroke="#1c3c8c" stroke-width="1"/><line x1="27.5" y1="32.5" x2="27.5" y2="36.5" stroke="#1c3c8c" stroke-width="1"/><rect x="23.5" y="48.5" width="8" height="8" rx="1" fill="#f0f0f0" stroke="#a8a8a8"/><line x1="25.5" y1="52.5" x2="29.5" y2="52.5" stroke="#1c3c8c" stroke-width="1"/><rect x="40.5" y="8.5" width="12" height="12" fill="#fff" stroke="#333" stroke-width="1"/><path d="M43,15 L45.5,18 L50,11.5" fill="none" stroke="#222" stroke-width="1.3"/><rect x="40.5" y="26.5" width="12" height="12" fill="#fff" stroke="#333" stroke-width="1"/><path d="M43,33 L45.5,36 L50,29.5" fill="none" stroke="#222" stroke-width="1.3"/><rect x="40.5" y="44.5" width="12" height="12" fill="#fff" stroke="#333" stroke-width="1"/><path d="M43,51 L45.5,54 L50,47.5" fill="none" stroke="#222" stroke-width="1.3"/><rect x="63.5" y="62.5" width="12" height="12" fill="#fff" stroke="#333" stroke-width="1"/><path d="M66,69 L68.5,72 L73,65.5" fill="none" stroke="#222" stroke-width="1.3"/><rect x="63.5" y="80.5" width="12" height="12" fill="#fff" stroke="#333" stroke-width="1"/><rect x="40.5" y="98.5" width="12" height="12" fill="#fff" stroke="#333" stroke-width="1"/><path d="M58.5,19 L63.5,11.5" stroke="#f06030" stroke-width="1.3"/><path d="M63.5,11.5 L68.5,19 L72.5,11.5" fill="none" stroke="#20a0a0" stroke-width="1.3"/><rect x="57.5" y="18" width="2.2" height="2.2" fill="#fff" stroke="#333" stroke-width="0.8"/><rect x="62.5" y="10.5" width="2.2" height="2.2" fill="#fff" stroke="#333" stroke-width="0.8"/><rect x="67.5" y="18" width="2.2" height="2.2" fill="#fff" stroke="#333" stroke-width="0.8"/><rect x="71.5" y="10" width="2.2" height="2.2" fill="#fff" stroke="#333" stroke-width="0.8"/><path d="M61.5,28.5 H69.5 L72.5,38 H57 Z" fill="#f2c992" stroke="#333" stroke-width="1"/><path d="M59.5,31.5 H71 M58.3,35 H72" stroke="#333" stroke-width="1"/><polygon points="65,43 73,47 73,55 65,59 57,55 57,47" fill="#6e5a40"/><polygon points="57,47 65,51 73,47 73,53 65,57 57,53" fill="#d8c8a0"/><polygon points="57,50 65,54 73,50 73,53 65,57 57,53" fill="#b8a27a"/><polygon points="65,43.5 72.5,47 65,50.8 57.5,47" fill="#8aa860"/><polygon points="88,61 96,65 96,73 88,77 80,73 80,65" fill="#6e5a40"/><polygon points="80,65 88,69 96,65 96,71 88,75 80,71" fill="#d8c8a0"/><polygon points="80,68 88,72 96,68 96,71 88,75 80,71" fill="#b8a27a"/><polygon points="88,61.5 95.5,65 88,68.8 80.5,65" fill="#8aa860"/><polygon points="88,79 96,83 96,91 88,95 80,91 80,83" fill="#6e5a40"/><polygon points="80,83 88,87 96,83 96,89 88,93 80,89" fill="#d8c8a0"/><polygon points="80,86 88,90 96,86 96,89 88,93 80,89" fill="#b8a27a"/><polygon points="88,79.5 95.5,83 88,86.8 80.5,83" fill="#8aa860"/><rect x="57.5" y="97.5" width="15" height="15" fill="#111"/><rect x="59" y="99" width="12" height="12" fill="#e8b890"/><path d="M64,99 H71 V103.5 L66,102 Z" fill="#c8f000"/><path d="M59,103.5 L65,104.5 L71,106 V108 H59 Z" fill="#f03000"/><path d="M59,103.5 L65,104.5 L71,106" fill="none" stroke="#111" stroke-width="0.8"/><path d="M59,108.5 H64 L71,110 V111 H59 Z" fill="#f8d000"/><path d="M59,108 H64 L71,109.5" fill="none" stroke="#111" stroke-width="0.8"/></svg>
<div class="t" style="left:77px;top:830px;font-size:10.6px">Line Queries</div>
<div class="t" style="left:77px;top:848px;font-size:10.6px">Embankments</div>
<div class="t" style="left:77px;top:866px;font-size:10.6px">Soil Column</div>
<div class="t" style="left:100px;top:884px;font-size:10.6px">Show Lines</div>
<div class="t" style="left:100px;top:902px;font-size:10.6px">Show Front Faces</div>
<div class="t" style="left:77px;top:920px;font-size:10.6px">Draw Materials on all Queries</div>

<!-- PLAN VIEW -->
<div class="a" id="plan" style="left:309px;top:160px;width:810px;height:932px;background:#fff;border-top:1px solid #a0a0a0;border-left:1px solid #a0a0a0;box-shadow:inset 1px 1px 0 #646464;border-right:2px solid #f8f8f8;border-bottom:2px solid #f8f8f8"></div>
<svg width="1920" height="1160" style="left:0;top:0"><defs><pattern id="hatch" x="0" y="4" width="8" height="8" patternUnits="userSpaceOnUse"><path d="M-1,-1 L9,9 M-9,-1 L1,9 M7,-1 L17,9" stroke="#4b0096" stroke-width="1.1"/></pattern><clipPath id="pclip"><rect x="311" y="162" width="806" height="928"/></clipPath></defs><g clip-path="url(#pclip)"><rect x="641.5" y="217.5" width="160" height="801" fill="none" stroke="#c0c0c0" stroke-width="1" stroke-dasharray="18,6" stroke-dashoffset="16.5"/><line x1="329.5" y1="162" x2="329.5" y2="1073" stroke="#000" stroke-width="1.3"/><line x1="329" y1="1072.5" x2="1116" y2="1072.5" stroke="#000" stroke-width="1.3"/><path d="M326,1066.5 H328 M324,1058.5 H328 M326,1050.5 H328 M326,1042.5 H328 M326,1034.5 H328 M326,1026.5 H328 M323,1018.5 H328 M326,1010.5 H328 M326,1002.5 H328 M326,994.5 H328 M326,986.5 H328 M324,978.5 H328 M326,970.5 H328 M326,962.5 H328 M326,954.5 H328 M326,946.5 H328 M323,938.5 H328 M326,930.5 H328 M326,922.5 H328 M326,914.5 H328 M326,906.5 H328 M324,898.5 H328 M326,890.5 H328 M326,882.5 H328 M326,874.5 H328 M326,866.5 H328 M323,858.5 H328 M326,850.5 H328 M326,842.5 H328 M326,834.5 H328 M326,826.5 H328 M324,818.5 H328 M326,810.5 H328 M326,802.5 H328 M326,794.5 H328 M326,786.5 H328 M323,778.5 H328 M326,770.5 H328 M326,762.5 H328 M326,754.5 H328 M326,746.5 H328 M324,738.5 H328 M326,730.5 H328 M326,722.5 H328 M326,714.5 H328 M326,706.5 H328 M323,698.5 H328 M326,690.5 H328 M326,682.5 H328 M326,674.5 H328 M326,666.5 H328 M324,658.5 H328 M326,650.5 H328 M326,642.5 H328 M326,634.5 H328 M326,626.5 H328 M323,618.5 H328 M326,610.5 H328 M326,602.5 H328 M326,594.5 H328 M326,586.5 H328 M324,578.5 H328 M326,570.5 H328 M326,562.5 H328 M326,554.5 H328 M326,546.5 H328 M323,538.5 H328 M326,530.5 H328 M326,522.5 H328 M326,514.5 H328 M326,506.5 H328 M324,498.5 H328 M326,490.5 H328 M326,482.5 H328 M326,474.5 H328 M326,466.5 H328 M323,458.5 H328 M326,450.5 H328 M326,442.5 H328 M326,434.5 H328 M326,426.5 H328 M324,418.5 H328 M326,410.5 H328 M326,402.5 H328 M326,394.5 H328 M326,386.5 H328 M323,378.5 H328 M326,370.5 H328 M326,362.5 H328 M326,354.5 H328 M326,346.5 H328 M324,338.5 H328 M326,330.5 H328 M326,322.5 H328 M326,314.5 H328 M326,306.5 H328 M323,298.5 H328 M326,290.5 H328 M326,282.5 H328 M326,274.5 H328 M326,266.5 H328 M324,258.5 H328 M326,250.5 H328 M326,242.5 H328 M326,234.5 H328 M326,226.5 H328 M323,218.5 H328 M326,210.5 H328 M326,202.5 H328 M326,194.5 H328 M326,186.5 H328 M324,178.5 H328 M326,170.5 H328 M329.5,1073.5 V1076 M337.5,1073.5 V1076 M345.5,1073.5 V1076 M353.5,1073.5 V1076 M361.5,1073.5 V1078 M369.5,1073.5 V1076 M377.5,1073.5 V1076 M385.5,1073.5 V1076 M393.5,1073.5 V1076 M401.5,1073.5 V1078 M409.5,1073.5 V1076 M417.5,1073.5 V1076 M425.5,1073.5 V1076 M433.5,1073.5 V1076 M441.5,1073.5 V1078 M449.5,1073.5 V1076 M457.5,1073.5 V1076 M465.5,1073.5 V1076 M473.5,1073.5 V1076 M481.5,1073.5 V1078 M489.5,1073.5 V1076 M497.5,1073.5 V1076 M505.5,1073.5 V1076 M513.5,1073.5 V1076 M521.5,1073.5 V1078 M529.5,1073.5 V1076 M537.5,1073.5 V1076 M545.5,1073.5 V1076 M553.5,1073.5 V1076 M561.5,1073.5 V1078 M569.5,1073.5 V1076 M577.5,1073.5 V1076 M585.5,1073.5 V1076 M593.5,1073.5 V1076 M601.5,1073.5 V1078 M609.5,1073.5 V1076 M617.5,1073.5 V1076 M625.5,1073.5 V1076 M633.5,1073.5 V1076 M641.5,1073.5 V1078 M649.5,1073.5 V1076 M657.5,1073.5 V1076 M665.5,1073.5 V1076 M673.5,1073.5 V1076 M681.5,1073.5 V1078 M689.5,1073.5 V1076 M697.5,1073.5 V1076 M705.5,1073.5 V1076 M713.5,1073.5 V1076 M721.5,1073.5 V1078 M729.5,1073.5 V1076 M737.5,1073.5 V1076 M745.5,1073.5 V1076 M753.5,1073.5 V1076 M761.5,1073.5 V1078 M769.5,1073.5 V1076 M777.5,1073.5 V1076 M785.5,1073.5 V1076 M793.5,1073.5 V1076 M801.5,1073.5 V1078 M809.5,1073.5 V1076 M817.5,1073.5 V1076 M825.5,1073.5 V1076 M833.5,1073.5 V1076 M841.5,1073.5 V1078 M849.5,1073.5 V1076 M857.5,1073.5 V1076 M865.5,1073.5 V1076 M873.5,1073.5 V1076 M881.5,1073.5 V1078 M889.5,1073.5 V1076 M897.5,1073.5 V1076 M905.5,1073.5 V1076 M913.5,1073.5 V1076 M921.5,1073.5 V1078 M929.5,1073.5 V1076 M937.5,1073.5 V1076 M945.5,1073.5 V1076 M953.5,1073.5 V1076 M961.5,1073.5 V1078 M969.5,1073.5 V1076 M977.5,1073.5 V1076 M985.5,1073.5 V1076 M993.5,1073.5 V1076 M1001.5,1073.5 V1078 M1009.5,1073.5 V1076 M1017.5,1073.5 V1076 M1025.5,1073.5 V1076 M1033.5,1073.5 V1076 M1041.5,1073.5 V1078 M1049.5,1073.5 V1076 M1057.5,1073.5 V1076 M1065.5,1073.5 V1076 M1073.5,1073.5 V1076 M1081.5,1073.5 V1078 M1089.5,1073.5 V1076 M1097.5,1073.5 V1076 M1105.5,1073.5 V1076 M1113.5,1073.5 V1076" stroke="#000" stroke-width="1.1"/><text x="0" y="0" transform="translate(321.3,1018.5) rotate(-90)" text-anchor="middle" font-size="10" font-family="Liberation Sans" fill="#000">-50</text><text x="0" y="0" transform="translate(321.3,938.5) rotate(-90)" text-anchor="middle" font-size="10" font-family="Liberation Sans" fill="#000">-40</text><text x="0" y="0" transform="translate(321.3,858.5) rotate(-90)" text-anchor="middle" font-size="10" font-family="Liberation Sans" fill="#000">-30</text><text x="0" y="0" transform="translate(321.3,778.5) rotate(-90)" text-anchor="middle" font-size="10" font-family="Liberation Sans" fill="#000">-20</text><text x="0" y="0" transform="translate(321.3,698.5) rotate(-90)" text-anchor="middle" font-size="10" font-family="Liberation Sans" fill="#000">-10</text><text x="0" y="0" transform="translate(321.3,618.5) rotate(-90)" text-anchor="middle" font-size="10" font-family="Liberation Sans" fill="#000">0</text><text x="0" y="0" transform="translate(321.3,538.5) rotate(-90)" text-anchor="middle" font-size="10" font-family="Liberation Sans" fill="#000">10</text><text x="0" y="0" transform="translate(321.3,458.5) rotate(-90)" text-anchor="middle" font-size="10" font-family="Liberation Sans" fill="#000">20</text><text x="0" y="0" transform="translate(321.3,378.5) rotate(-90)" text-anchor="middle" font-size="10" font-family="Liberation Sans" fill="#000">30</text><text x="0" y="0" transform="translate(321.3,298.5) rotate(-90)" text-anchor="middle" font-size="10" font-family="Liberation Sans" fill="#000">40</text><text x="0" y="0" transform="translate(321.3,218.5) rotate(-90)" text-anchor="middle" font-size="10" font-family="Liberation Sans" fill="#000">50</text><text x="401.5" y="1087.3" text-anchor="middle" font-size="10" font-family="Liberation Sans" fill="#000">-40</text><text x="481.5" y="1087.3" text-anchor="middle" font-size="10" font-family="Liberation Sans" fill="#000">-30</text><text x="561.5" y="1087.3" text-anchor="middle" font-size="10" font-family="Liberation Sans" fill="#000">-20</text><text x="641.5" y="1087.3" text-anchor="middle" font-size="10" font-family="Liberation Sans" fill="#000">-10</text><text x="721.5" y="1087.3" text-anchor="middle" font-size="10" font-family="Liberation Sans" fill="#000">0</text><text x="801.5" y="1087.3" text-anchor="middle" font-size="10" font-family="Liberation Sans" fill="#000">10</text><text x="881.5" y="1087.3" text-anchor="middle" font-size="10" font-family="Liberation Sans" fill="#000">20</text><text x="961.5" y="1087.3" text-anchor="middle" font-size="10" font-family="Liberation Sans" fill="#000">30</text><text x="1041.5" y="1087.3" text-anchor="middle" font-size="10" font-family="Liberation Sans" fill="#000">40</text><path d="M564.5,618.5 V614.5 L575.0,612.2 V618.5 Z" fill="url(#hatch)" stroke="#4b0096" stroke-width="1.2"/><path d="M580.5,618.5 V612.2 L591.0,609.2 V618.5 Z" fill="url(#hatch)" stroke="#4b0096" stroke-width="1.2"/><path d="M596.5,618.5 V608 L607.0,604.2 V618.5 Z" fill="url(#hatch)" stroke="#4b0096" stroke-width="1.2"/><path d="M612.5,618.5 V603.3 L623.0,599.2 V618.5 Z" fill="url(#hatch)" stroke="#4b0096" stroke-width="1.2"/><path d="M628.5,618.5 V599 L639.0,596.2 V618.5 Z" fill="url(#hatch)" stroke="#4b0096" stroke-width="1.2"/><path d="M644.5,618.5 V596.2 L655.0,594.1 V618.5 Z" fill="url(#hatch)" stroke="#4b0096" stroke-width="1.2"/><path d="M660.5,618.5 V594 L671.0,593.4 V618.5 Z" fill="url(#hatch)" stroke="#4b0096" stroke-width="1.2"/><path d="M676.5,618.5 V593.4 L687.0,593.2 V618.5 Z" fill="url(#hatch)" stroke="#4b0096" stroke-width="1.2"/><path d="M692.5,618.5 V593.2 L703.0,593.2 V618.5 Z" fill="url(#hatch)" stroke="#4b0096" stroke-width="1.2"/><path d="M724.5,618.5 V593.2 L735.0,594.2 V618.5 Z" fill="url(#hatch)" stroke="#4b0096" stroke-width="1.2"/><path d="M740.5,618.5 V594.2 L751.0,595.1 V618.5 Z" fill="url(#hatch)" stroke="#4b0096" stroke-width="1.2"/><path d="M756.5,618.5 V595.3 L767.0,598.1 V618.5 Z" fill="url(#hatch)" stroke="#4b0096" stroke-width="1.2"/><path d="M772.5,618.5 V598.4 L783.0,601 V618.5 Z" fill="url(#hatch)" stroke="#4b0096" stroke-width="1.2"/><path d="M788.5,618.5 V601.7 L799.0,607.2 V618.5 Z" fill="url(#hatch)" stroke="#4b0096" stroke-width="1.2"/><path d="M804.5,618.5 V607.2 L815.0,611 V618.5 Z" fill="url(#hatch)" stroke="#4b0096" stroke-width="1.2"/><path d="M820.5,618.5 V611.2 L831.0,613.1 V618.5 Z" fill="url(#hatch)" stroke="#4b0096" stroke-width="1.2"/><path d="M836.5,618.5 V613.1 L847.0,615.2 V618.5 Z" fill="url(#hatch)" stroke="#4b0096" stroke-width="1.2"/><path d="M852.5,618.5 V615.2 L863.0,616.1 V618.5 Z" fill="url(#hatch)" stroke="#4b0096" stroke-width="1.2"/><path d="M868.5,618.5 V616.1 L879.0,616.7 V618.5 Z" fill="url(#hatch)" stroke="#4b0096" stroke-width="1.2"/><line x1="561" y1="618.5" x2="879" y2="618.5" stroke="#a00000" stroke-width="1.2"/><line x1="564.5" y1="618.5" x2="575.0" y2="618.5" stroke="#4b0096" stroke-width="1.2"/><line x1="580.5" y1="618.5" x2="591.0" y2="618.5" stroke="#4b0096" stroke-width="1.2"/><line x1="596.5" y1="618.5" x2="607.0" y2="618.5" stroke="#4b0096" stroke-width="1.2"/><line x1="612.5" y1="618.5" x2="623.0" y2="618.5" stroke="#4b0096" stroke-width="1.2"/><line x1="628.5" y1="618.5" x2="639.0" y2="618.5" stroke="#4b0096" stroke-width="1.2"/><line x1="644.5" y1="618.5" x2="655.0" y2="618.5" stroke="#4b0096" stroke-width="1.2"/><line x1="660.5" y1="618.5" x2="671.0" y2="618.5" stroke="#4b0096" stroke-width="1.2"/><line x1="676.5" y1="618.5" x2="687.0" y2="618.5" stroke="#4b0096" stroke-width="1.2"/><line x1="692.5" y1="618.5" x2="703.0" y2="618.5" stroke="#4b0096" stroke-width="1.2"/><line x1="724.5" y1="618.5" x2="735.0" y2="618.5" stroke="#4b0096" stroke-width="1.2"/><line x1="740.5" y1="618.5" x2="751.0" y2="618.5" stroke="#4b0096" stroke-width="1.2"/><line x1="756.5" y1="618.5" x2="767.0" y2="618.5" stroke="#4b0096" stroke-width="1.2"/><line x1="772.5" y1="618.5" x2="783.0" y2="618.5" stroke="#4b0096" stroke-width="1.2"/><line x1="788.5" y1="618.5" x2="799.0" y2="618.5" stroke="#4b0096" stroke-width="1.2"/><line x1="804.5" y1="618.5" x2="815.0" y2="618.5" stroke="#4b0096" stroke-width="1.2"/><line x1="820.5" y1="618.5" x2="831.0" y2="618.5" stroke="#4b0096" stroke-width="1.2"/><line x1="836.5" y1="618.5" x2="847.0" y2="618.5" stroke="#4b0096" stroke-width="1.2"/><line x1="852.5" y1="618.5" x2="863.0" y2="618.5" stroke="#4b0096" stroke-width="1.2"/><line x1="868.5" y1="618.5" x2="879.0" y2="618.5" stroke="#4b0096" stroke-width="1.2"/><circle cx="561" cy="618.2" r="4.2" fill="#ffd700" stroke="#a02000" stroke-width="0.8"/><rect x="703.5" y="593.5" width="17" height="28" fill="#fff" stroke="#000" stroke-width="1.2"/><text transform="translate(715.5,607.5) rotate(-90)" text-anchor="middle" font-size="10" font-family="Liberation Sans" fill="#ff1a1a">32.07</text><rect x="879.5" y="598.5" width="17" height="23" fill="#fff" stroke="#000" stroke-width="1.2"/><text transform="translate(891.5,610) rotate(-90)" text-anchor="middle" font-size="10" font-family="Liberation Sans" fill="#2020ff">1.59</text><rect x="724.5" y="1021.5" width="104" height="19" fill="#fff" stroke="#000" stroke-width="1.2"/><text x="727" y="1034.2" font-size="10.5" font-family="Liberation Sans" fill="#000">Embankment Load 1</text></g></svg>

<!-- 3D VIEW -->
<div class="a" id="v3d" style="left:1121px;top:160px;width:794px;height:932px;background:#c8d2c6;border-top:1px solid #a0a0a0;border-left:1px solid #a0a0a0;box-shadow:inset 1px 1px 0 #646464;border-right:2px solid #f8f8f8;border-bottom:2px solid #f8f8f8"></div>
<svg width="1920" height="1160" style="left:0;top:0"><defs><clipPath id="vclip"><rect x="1123" y="162" width="790" height="928"/></clipPath></defs><g clip-path="url(#vclip)"><rect x="1123" y="162" width="791" height="928" fill="#ffffff"/><polygon points="1123,389 1914,384 1914,1090 1123,1090" fill="#c6d1c5"/><polygon points="1123,389 1914,384 1914,402 1123,406.5" fill="#fdfde2"/><polygon points="1123,406.5 1914,402 1914,487.5 1123,493" fill="#deedda"/><line x1="1123" y1="388.8" x2="1914" y2="384" stroke="#3a3a3a" stroke-width="2"/><line x1="1123" y1="388.8" x2="1914" y2="384" stroke="#000" stroke-width="2" stroke-dasharray="5.5,4.5"/><line x1="1123" y1="405.7" x2="1914" y2="401.2" stroke="#b4ac2c" stroke-width="1"/><line x1="1123" y1="406.7" x2="1914" y2="402.2" stroke="#111" stroke-width="1"/><line x1="1123" y1="493" x2="1914" y2="487.5" stroke="#4e7e4e" stroke-width="1.4"/><line x1="1123" y1="1017.3" x2="1914" y2="1005" stroke="#3a3a3a" stroke-width="2"/><line x1="1123" y1="1017.3" x2="1914" y2="1005" stroke="#000" stroke-width="2" stroke-dasharray="5.5,4.5"/><line x1="1123" y1="1063.3" x2="1914" y2="1050.3" stroke="#b4ac2c" stroke-width="1"/><line x1="1123" y1="1064.3" x2="1914" y2="1051.3" stroke="#111" stroke-width="1"/><polygon points="1260.3,552.5 1773.5,548.8 1771,697.6 1264,702.8" fill="#30113e"/>
<polygon points="1260.3,552.5 1773.5,548.8 1772.4,611.7 1767.9,614.5 1763.4,617.1 1758.9,619.6 1754.4,621.9 1749.9,624.0 1745.4,626.2 1740.9,628.7 1736.3,631.0 1731.8,634.0 1727.3,637.5 1722.8,640.7 1718.3,645.2 1713.8,649.8 1709.3,653.6 1704.7,658.7 1700.2,663.2 1695.7,666.7 1691.2,669.7 1686.8,672.2 1682.3,674.2 1677.8,675.7 1673.3,676.9 1668.9,678.0 1664.4,679.4 1660.0,680.5 1655.5,681.6 1651.0,682.6 1646.6,683.4 1642.1,684.0 1637.7,684.5 1633.2,684.9 1628.8,685.3 1624.3,685.7 1619.8,686.1 1615.4,686.4 1610.9,686.7 1606.5,687.0 1602.0,687.1 1597.6,687.2 1593.1,687.3 1588.7,687.4 1584.2,687.6 1579.8,687.7 1575.3,687.8 1570.9,687.9 1566.4,688.0 1562.0,688.1 1557.5,688.1 1553.1,688.2 1548.6,688.3 1544.2,688.3 1539.7,688.4 1535.3,688.5 1530.8,688.5 1526.4,688.6 1521.9,688.7 1517.5,688.8 1513.0,688.9 1508.6,688.9 1504.1,689.0 1499.6,689.0 1495.2,689.1 1490.7,689.1 1486.3,689.2 1481.8,689.2 1477.4,689.3 1472.9,689.4 1468.5,689.5 1464.0,689.6 1459.6,689.7 1455.1,689.9 1450.7,690.0 1446.2,690.1 1441.8,690.2 1437.3,690.3 1432.9,690.5 1428.4,690.6 1424.0,690.8 1419.5,690.9 1415.1,691.1 1410.6,691.2 1406.2,691.4 1401.7,691.5 1397.3,691.6 1392.8,691.7 1388.4,691.7 1383.9,691.7 1379.5,691.6 1375.0,691.5 1370.6,691.3 1366.1,691.0 1361.7,690.9 1357.2,690.7 1352.7,690.5 1348.3,690.2 1343.8,689.9 1339.4,689.6 1334.9,689.3 1330.5,689.0 1326.0,688.5 1321.5,687.9 1317.1,687.1 1312.6,686.2 1308.1,685.3 1303.6,684.3 1299.2,683.2 1294.7,682.3 1290.2,681.2 1285.7,679.4 1281.2,677.1 1276.7,674.1 1272.2,672.8 1267.7,671.8 1263.2,670.8" fill="#3e1d64" stroke="#3e1d64" stroke-width="0.4"/>
<polygon points="1260.3,552.5 1747.1,549.0 1746.7,574.0 1742.2,577.9 1737.6,581.6 1733.0,586.0 1728.5,591.8 1723.9,596.9 1719.3,603.6 1714.8,611.3 1710.2,617.8 1705.6,625.9 1701.1,633.6 1696.5,639.7 1692.0,645.0 1687.5,649.4 1683.0,653.1 1678.5,655.7 1674.0,657.9 1669.5,659.9 1665.0,662.3 1660.6,664.4 1656.1,666.3 1651.6,668.0 1647.1,669.6 1642.7,670.8 1638.2,671.6 1633.7,672.3 1629.3,673.1 1624.8,673.8 1620.3,674.5 1615.9,675.1 1611.4,675.6 1606.9,676.1 1602.5,676.3 1598.0,676.5 1593.5,676.6 1589.1,676.9 1584.6,677.1 1580.2,677.3 1575.7,677.5 1571.2,677.7 1566.8,677.9 1562.3,678.0 1557.9,678.1 1553.4,678.2 1548.9,678.3 1544.5,678.5 1540.0,678.6 1535.6,678.7 1531.1,678.8 1526.6,678.9 1522.2,679.0 1517.7,679.2 1513.3,679.2 1508.8,679.3 1504.3,679.3 1499.9,679.4 1495.4,679.5 1491.0,679.5 1486.5,679.5 1482.0,679.6 1477.6,679.7 1473.1,679.8 1468.7,679.9 1464.2,680.1 1459.7,680.3 1455.3,680.5 1450.8,680.6 1446.4,680.8 1441.9,680.9 1437.4,681.0 1433.0,681.2 1428.5,681.4 1424.1,681.6 1419.6,681.9 1415.2,682.1 1410.7,682.3 1406.2,682.5 1401.8,682.6 1397.3,682.8 1392.9,682.9 1388.4,682.9 1383.9,682.7 1379.5,682.5 1375.0,682.2 1370.5,681.8 1366.1,681.3 1361.6,680.9 1357.1,680.5 1352.7,680.1 1348.2,679.5 1343.7,678.9 1339.3,678.3 1334.8,677.7 1330.3,677.0 1325.8,676.2 1321.3,674.9 1316.8,673.4 1312.3,671.8 1307.8,670.0 1303.3,668.0 1298.8,666.1 1294.3,664.3 1289.8,662.2 1285.3,659.1 1280.7,654.8 1276.1,649.6 1271.6,647.2 1267.1,645.4 1262.5,643.5" fill="#472c85" stroke="#472c85" stroke-width="0.4"/>
<polygon points="1260.3,552.5 1718.3,549.2 1718.0,574.5 1713.4,583.5 1708.9,591.3 1704.3,602.9 1699.7,612.0 1695.1,619.5 1690.6,626.2 1686.1,631.6 1681.6,636.0 1677.1,639.3 1672.6,642.2 1668.1,645.1 1663.7,648.3 1659.2,651.0 1654.7,653.5 1650.2,655.9 1645.8,657.9 1641.3,659.3 1636.9,660.4 1632.4,661.4 1628.0,662.5 1623.5,663.5 1619.0,664.4 1614.6,665.2 1610.1,665.9 1605.7,666.5 1601.2,666.8 1596.8,667.0 1592.4,667.3 1587.9,667.7 1583.5,668.0 1579.0,668.3 1574.6,668.6 1570.1,668.9 1565.7,669.1 1561.2,669.2 1556.8,669.4 1552.3,669.6 1547.9,669.7 1543.4,669.9 1539.0,670.0 1534.5,670.2 1530.1,670.3 1525.6,670.5 1521.2,670.7 1516.7,670.9 1512.3,670.9 1507.9,670.9 1503.4,671.0 1499.0,671.2 1494.5,671.2 1490.1,671.2 1485.6,671.2 1481.2,671.3 1476.7,671.4 1472.3,671.5 1467.8,671.7 1463.4,671.8 1458.9,672.1 1454.5,672.3 1450.1,672.4 1445.6,672.5 1441.2,672.7 1436.7,672.9 1432.3,673.0 1427.8,673.2 1423.4,673.5 1418.9,673.8 1414.5,674.1 1410.1,674.3 1405.6,674.5 1401.2,674.6 1396.7,674.7 1392.3,674.8 1387.8,674.7 1383.4,674.5 1378.9,674.2 1374.5,673.7 1370.0,673.0 1365.6,672.3 1361.1,671.7 1356.6,671.1 1352.2,670.4 1347.7,669.7 1343.3,668.8 1338.8,667.8 1334.3,667.0 1329.8,666.0 1325.4,664.7 1320.9,662.9 1316.4,660.7 1311.9,658.5 1307.4,656.0 1302.9,653.2 1298.4,650.6 1293.9,648.1 1289.3,645.2 1284.8,640.8 1280.2,635.0 1275.5,628.0 1271.0,624.9 1266.5,622.4 1262.0,619.8" fill="#4c389a" stroke="#4c389a" stroke-width="0.4"/>
<polygon points="1260.3,552.5 1707.0,549.3 1706.8,574.2 1702.1,586.3 1697.5,596.1 1692.9,604.5 1688.4,611.7 1683.8,617.8 1679.3,622.2 1674.8,626.0 1670.3,629.3 1665.7,633.4 1661.2,637.0 1656.7,640.1 1652.2,643.2 1647.7,645.9 1643.2,648.0 1638.8,649.5 1634.3,650.8 1629.8,652.1 1625.3,653.4 1620.8,654.6 1616.4,655.7 1611.9,656.6 1607.4,657.5 1602.9,658.0 1598.5,658.4 1594.0,658.7 1589.5,659.2 1585.0,659.6 1580.6,660.0 1576.1,660.4 1571.6,660.8 1567.1,661.1 1562.7,661.3 1558.2,661.5 1553.7,661.8 1549.3,662.0 1544.8,662.2 1540.3,662.4 1535.8,662.6 1531.4,662.7 1526.9,662.9 1522.4,663.2 1518.0,663.4 1513.5,663.5 1509.0,663.6 1504.5,663.7 1500.1,663.8 1495.6,663.8 1491.1,663.8 1486.7,663.9 1482.2,663.9 1477.7,664.0 1473.2,664.1 1468.8,664.3 1464.3,664.4 1459.8,664.7 1455.4,664.9 1450.9,665.1 1446.4,665.2 1442.0,665.3 1437.5,665.5 1433.0,665.6 1428.5,665.8 1424.1,666.1 1419.6,666.4 1415.1,666.7 1410.7,666.9 1406.2,667.1 1401.7,667.3 1397.3,667.4 1392.8,667.4 1388.3,667.3 1383.9,667.0 1379.4,666.6 1374.9,666.0 1370.4,665.1 1365.9,664.2 1361.4,663.4 1356.9,662.6 1352.5,661.7 1348.0,660.7 1343.5,659.6 1339.0,658.3 1334.5,657.2 1330.0,655.9 1325.5,654.3 1321.0,652.0 1316.4,649.3 1311.9,646.5 1307.3,643.4 1302.8,639.9 1298.2,636.6 1293.7,633.4 1289.1,629.9 1284.5,624.5 1279.9,617.5 1275.2,608.9 1270.6,605.0 1266.0,602.0 1261.4,598.7" fill="#4f45b0" stroke="#4f45b0" stroke-width="0.4"/>
<polygon points="1260.3,552.5 1699.6,549.3 1699.3,574.7 1694.7,584.6 1690.1,593.4 1685.5,600.8 1681.0,606.6 1676.4,611.1 1671.9,615.1 1667.3,619.6 1662.8,624.0 1658.3,627.7 1653.7,631.4 1649.2,634.7 1644.7,637.6 1640.2,639.4 1635.7,641.1 1631.2,642.6 1626.7,644.2 1622.2,645.6 1617.7,646.9 1613.2,648.1 1608.7,649.2 1604.2,650.0 1599.7,650.4 1595.2,650.9 1590.7,651.4 1586.2,652.0 1581.7,652.5 1577.2,653.0 1572.7,653.5 1568.2,653.9 1563.8,654.2 1559.3,654.5 1554.8,654.7 1550.3,655.0 1545.8,655.3 1541.3,655.6 1536.8,655.7 1532.3,656.0 1527.8,656.2 1523.3,656.5 1518.9,656.8 1514.4,656.9 1509.9,657.0 1505.4,657.1 1500.9,657.2 1496.4,657.3 1491.9,657.3 1487.4,657.3 1482.9,657.3 1478.4,657.4 1474.0,657.5 1469.5,657.6 1465.0,657.8 1460.5,658.0 1456.0,658.3 1451.5,658.4 1447.0,658.5 1442.5,658.6 1438.0,658.8 1433.6,658.9 1429.1,659.1 1424.6,659.4 1420.1,659.7 1415.6,660.0 1411.1,660.2 1406.6,660.4 1402.2,660.5 1397.7,660.6 1393.2,660.6 1388.7,660.5 1384.2,660.1 1379.7,659.5 1375.2,658.8 1370.7,657.8 1366.2,656.6 1361.7,655.6 1357.2,654.7 1352.6,653.6 1348.1,652.3 1343.6,651.0 1339.1,649.5 1334.6,648.1 1330.0,646.5 1325.5,644.7 1321.0,641.9 1316.4,638.8 1311.8,635.4 1307.3,631.8 1302.7,627.7 1298.1,623.7 1293.5,620.0 1288.9,615.8 1284.3,609.7 1279.6,601.6 1274.8,591.7 1270.2,587.1 1265.6,583.7 1261.0,579.9" fill="#4d53c8" stroke="#4d53c8" stroke-width="0.4"/>
<polygon points="1274.7,552.4 1692.7,549.4 1692.4,574.6 1687.8,583.4 1683.3,590.8 1678.8,596.2 1674.2,600.9 1669.7,605.4 1665.2,610.6 1660.7,615.1 1656.2,619.3 1651.7,623.2 1647.2,626.7 1642.7,629.4 1638.3,631.4 1633.8,633.2 1629.3,635.0 1624.8,636.7 1620.4,638.3 1615.9,639.7 1611.4,641.0 1607.0,642.2 1602.5,642.9 1598.0,643.5 1593.6,644.0 1589.1,644.7 1584.7,645.3 1580.2,645.9 1575.7,646.5 1571.3,647.0 1566.8,647.5 1562.4,647.8 1557.9,648.2 1553.4,648.5 1549.0,648.8 1544.5,649.2 1540.1,649.4 1535.6,649.7 1531.2,649.9 1526.7,650.2 1522.2,650.5 1517.8,650.9 1513.3,650.9 1508.9,651.0 1504.4,651.1 1499.9,651.3 1495.5,651.3 1491.0,651.3 1486.6,651.3 1482.1,651.4 1477.7,651.4 1473.2,651.5 1468.7,651.7 1464.3,651.8 1459.8,652.1 1455.4,652.3 1450.9,652.4 1446.5,652.5 1442.0,652.6 1437.5,652.7 1433.1,652.8 1428.6,653.0 1424.2,653.2 1419.7,653.5 1415.3,653.8 1410.8,654.0 1406.4,654.2 1401.9,654.3 1397.4,654.3 1393.0,654.3 1388.5,654.1 1384.1,653.6 1379.6,652.9 1375.1,652.1 1370.6,650.9 1366.2,649.6 1361.7,648.4 1357.2,647.2 1352.7,646.0 1348.2,644.6 1343.7,643.0 1339.2,641.3 1334.7,639.6 1330.2,637.9 1325.7,635.9 1321.2,632.8 1316.7,629.3 1312.1,625.4 1307.6,621.4 1303.0,616.9 1298.4,612.3 1293.9,608.2 1289.3,603.6 1284.7,597.3 1280.0,588.6 1275.3,578.1" fill="#4762d8" stroke="#4762d8" stroke-width="0.4"/>
<polygon points="1280.3,552.4 1686.0,549.4 1685.8,574.6 1681.2,581.6 1676.6,587.1 1672.1,592.0 1667.6,597.5 1663.0,602.9 1658.5,607.5 1654.0,612.1 1649.5,616.2 1645.0,619.8 1640.5,622.2 1636.0,624.3 1631.5,626.2 1627.0,628.3 1622.5,630.2 1618.0,631.9 1613.6,633.4 1609.1,634.8 1604.6,635.9 1600.1,636.6 1595.6,637.2 1591.2,637.9 1586.7,638.7 1582.2,639.4 1577.7,640.1 1573.3,640.7 1568.8,641.3 1564.3,641.7 1559.8,642.1 1555.4,642.5 1550.9,642.9 1546.4,643.3 1541.9,643.7 1537.5,643.9 1533.0,644.2 1528.5,644.5 1524.1,644.9 1519.6,645.2 1515.1,645.5 1510.6,645.5 1506.2,645.7 1501.7,645.8 1497.2,645.9 1492.7,645.9 1488.3,645.9 1483.8,645.9 1479.3,646.0 1474.9,646.0 1470.4,646.1 1465.9,646.3 1461.4,646.5 1457.0,646.7 1452.5,646.9 1448.0,646.9 1443.5,647.0 1439.1,647.0 1434.6,647.1 1430.1,647.2 1425.7,647.4 1421.2,647.7 1416.7,648.0 1412.2,648.2 1407.8,648.3 1403.3,648.5 1398.8,648.5 1394.4,648.4 1389.9,648.3 1385.4,647.7 1380.9,647.0 1376.4,646.1 1371.9,644.8 1367.4,643.4 1362.9,641.9 1358.4,640.7 1353.9,639.3 1349.4,637.7 1344.9,636.0 1340.4,634.1 1335.9,632.2 1331.4,630.2 1326.9,628.1 1322.3,624.9 1317.8,621.2 1313.2,616.9 1308.6,612.6 1304.0,607.7 1299.4,602.3 1294.8,597.9 1290.2,593.0 1285.6,586.9 1280.9,577.8" fill="#3f72e5" stroke="#3f72e5" stroke-width="0.4"/>
<polygon points="1286.0,552.3 1678.6,549.5 1678.3,574.5 1673.8,580.0 1669.2,585.5 1664.7,591.6 1660.1,596.9 1655.6,601.9 1651.1,606.5 1646.6,610.6 1642.1,613.7 1637.6,616.1 1633.1,618.2 1628.6,620.5 1624.1,622.6 1619.6,624.6 1615.1,626.3 1610.6,627.9 1606.1,629.3 1601.6,630.1 1597.1,630.9 1592.6,631.7 1588.2,632.5 1583.7,633.4 1579.2,634.1 1574.7,634.9 1570.2,635.6 1565.7,636.1 1561.3,636.6 1556.8,637.0 1552.3,637.5 1547.8,637.9 1543.3,638.4 1538.9,638.7 1534.4,639.0 1529.9,639.3 1525.4,639.7 1520.9,640.1 1516.5,640.4 1512.0,640.5 1507.5,640.6 1503.0,640.8 1498.6,641.0 1494.1,640.9 1489.6,640.9 1485.1,640.9 1480.6,640.9 1476.2,641.0 1471.7,641.1 1467.2,641.2 1462.7,641.4 1458.2,641.5 1453.8,641.8 1449.3,641.8 1444.8,641.8 1440.3,641.8 1435.8,641.9 1431.4,642.0 1426.9,642.1 1422.4,642.3 1417.9,642.6 1413.5,642.8 1409.0,642.9 1404.5,643.0 1400.0,643.0 1395.5,642.9 1391.1,642.8 1386.6,642.2 1382.1,641.4 1377.6,640.6 1373.1,639.2 1368.6,637.6 1364.1,635.9 1359.6,634.5 1355.0,633.0 1350.5,631.3 1346.0,629.4 1341.5,627.4 1337.0,625.2 1332.4,623.1 1327.9,620.8 1323.4,617.7 1318.8,613.7 1314.2,609.1 1309.6,604.4 1305.0,599.3 1300.4,593.5 1295.8,588.6 1291.2,583.4 1286.5,577.5" fill="#3682ec" stroke="#3682ec" stroke-width="0.4"/>
<polygon points="1293.9,552.3 1670.6,549.5 1670.4,574.6 1665.8,581.3 1661.2,587.2 1656.7,592.5 1652.1,597.7 1647.6,602.2 1643.0,605.8 1638.5,608.5 1634.0,610.9 1629.4,613.3 1624.9,615.7 1620.4,617.9 1615.9,619.8 1611.3,621.6 1606.8,623.2 1602.3,624.2 1597.8,625.1 1593.3,625.9 1588.8,626.9 1584.3,627.8 1579.8,628.7 1575.2,629.5 1570.7,630.3 1566.2,630.9 1561.7,631.5 1557.2,632.0 1552.7,632.5 1548.2,633.0 1543.7,633.5 1539.2,633.8 1534.7,634.2 1530.2,634.6 1525.7,635.0 1521.1,635.4 1516.6,635.8 1512.1,635.8 1507.6,636.0 1503.1,636.1 1498.6,636.3 1494.1,636.3 1489.6,636.2 1485.1,636.2 1480.6,636.3 1476.1,636.3 1471.6,636.4 1467.1,636.5 1462.6,636.7 1458.1,636.8 1453.5,637.0 1449.0,637.0 1444.5,637.0 1440.0,637.0 1435.5,637.0 1431.0,637.1 1426.5,637.2 1422.0,637.4 1417.5,637.7 1413.0,637.8 1408.5,637.9 1404.0,637.9 1399.5,637.9 1395.0,637.7 1390.4,637.5 1385.9,636.8 1381.4,635.9 1376.9,634.9 1372.4,633.3 1367.8,631.5 1363.3,629.7 1358.7,628.1 1354.2,626.4 1349.7,624.5 1345.1,622.4 1340.5,620.1 1336.0,617.8 1331.4,615.4 1326.9,612.8 1322.3,609.1 1317.7,604.7 1313.0,599.6 1308.4,594.6 1303.8,588.9 1299.1,582.6 1294.5,577.4" fill="#2b92ef" stroke="#2b92ef" stroke-width="0.4"/>
<polygon points="1301.1,552.2 1665.0,549.6 1664.8,574.5 1660.2,580.5 1655.7,586.1 1651.2,591.4 1646.7,596.0 1642.2,599.5 1637.7,602.3 1633.2,604.8 1628.7,607.5 1624.2,609.9 1619.8,612.2 1615.3,614.3 1610.8,616.1 1606.3,617.8 1601.9,618.9 1597.4,619.8 1592.9,620.7 1588.5,621.8 1584.0,622.8 1579.5,623.7 1575.1,624.6 1570.6,625.5 1566.1,626.2 1561.7,626.7 1557.2,627.3 1552.7,627.8 1548.3,628.4 1543.8,628.9 1539.4,629.3 1534.9,629.7 1530.4,630.1 1526.0,630.5 1521.5,631.0 1517.0,631.4 1512.6,631.5 1508.1,631.6 1503.7,631.8 1499.2,632.0 1494.7,632.0 1490.3,631.9 1485.8,631.9 1481.3,631.9 1476.9,632.0 1472.4,632.0 1468.0,632.1 1463.5,632.2 1459.0,632.4 1454.6,632.6 1450.1,632.6 1445.6,632.5 1441.2,632.5 1436.7,632.5 1432.3,632.5 1427.8,632.5 1423.3,632.7 1418.9,632.9 1414.4,633.1 1409.9,633.1 1405.5,633.1 1401.0,633.1 1396.6,632.9 1392.1,632.7 1387.6,632.1 1383.1,631.2 1378.7,630.1 1374.2,628.7 1369.7,626.8 1365.2,624.8 1360.7,623.1 1356.2,621.3 1351.7,619.4 1347.2,617.2 1342.7,614.8 1338.2,612.3 1333.6,609.9 1329.1,607.2 1324.6,604.1 1320.0,599.7 1315.4,594.7 1310.9,589.3 1306.3,583.7 1301.6,577.5" fill="#25a2eb" stroke="#25a2eb" stroke-width="0.4"/>
<polygon points="1306.7,552.2 1659.3,549.6 1659.1,574.5 1654.6,580.4 1650.0,585.8 1645.5,590.6 1641.0,593.9 1636.4,596.8 1631.9,599.5 1627.4,602.3 1622.9,604.9 1618.4,607.3 1613.9,609.4 1609.4,611.4 1604.9,613.0 1600.4,614.1 1595.9,615.1 1591.4,616.2 1586.9,617.3 1582.4,618.4 1577.9,619.4 1573.4,620.3 1568.9,621.2 1564.4,621.9 1559.9,622.5 1555.4,623.1 1550.9,623.7 1546.4,624.3 1541.9,624.9 1537.4,625.3 1533.0,625.7 1528.5,626.2 1524.0,626.6 1519.5,627.1 1515.0,627.4 1510.5,627.5 1506.0,627.7 1501.5,627.9 1497.0,628.0 1492.5,627.9 1488.0,627.9 1483.5,627.9 1479.1,627.9 1474.6,627.9 1470.1,628.0 1465.6,628.1 1461.1,628.2 1456.6,628.4 1452.1,628.5 1447.6,628.4 1443.1,628.3 1438.6,628.2 1434.1,628.2 1429.6,628.2 1425.2,628.3 1420.7,628.4 1416.2,628.6 1411.7,628.6 1407.2,628.6 1402.7,628.6 1398.2,628.4 1393.7,628.1 1389.2,627.7 1384.7,626.7 1380.2,625.6 1375.7,624.2 1371.1,622.3 1366.6,620.2 1362.1,618.2 1357.6,616.3 1353.0,614.3 1348.5,612.0 1343.9,609.6 1339.4,606.8 1334.8,604.2 1330.3,601.4 1325.7,598.4 1321.1,593.9 1316.5,588.8 1311.9,583.0 1307.3,577.3" fill="#21b2e3" stroke="#21b2e3" stroke-width="0.4"/>
<polygon points="1312.4,552.1 1653.9,549.7 1653.7,574.8 1649.2,580.3 1644.7,585.1 1640.2,588.4 1635.7,591.4 1631.2,594.3 1626.7,597.2 1622.2,599.9 1617.8,602.4 1613.3,604.6 1608.8,606.7 1604.3,608.2 1599.8,609.4 1595.4,610.5 1590.9,611.7 1586.4,612.9 1581.9,614.0 1577.5,615.1 1573.0,616.1 1568.5,617.0 1564.1,617.8 1559.6,618.4 1555.1,619.1 1550.7,619.7 1546.2,620.4 1541.7,620.9 1537.3,621.4 1532.8,621.8 1528.3,622.3 1523.9,622.8 1519.4,623.3 1514.9,623.6 1510.5,623.7 1506.0,623.9 1501.5,624.1 1497.1,624.3 1492.6,624.2 1488.1,624.1 1483.6,624.1 1479.2,624.1 1474.7,624.1 1470.2,624.2 1465.8,624.2 1461.3,624.3 1456.8,624.5 1452.4,624.5 1447.9,624.4 1443.4,624.3 1439.0,624.2 1434.5,624.2 1430.0,624.1 1425.6,624.1 1421.1,624.3 1416.6,624.4 1412.2,624.4 1407.7,624.3 1403.2,624.3 1398.8,624.0 1394.3,623.7 1389.8,623.4 1385.3,622.3 1380.8,621.1 1376.4,619.8 1371.9,617.8 1367.3,615.6 1362.8,613.4 1358.3,611.4 1353.8,609.3 1349.3,606.9 1344.8,604.4 1340.3,601.5 1335.7,598.7 1331.2,595.8 1326.7,592.7 1322.1,588.4 1317.5,583.2 1312.9,577.3" fill="#20c0d8" stroke="#20c0d8" stroke-width="0.4"/>
<polygon points="1317.5,552.1 1649.0,549.7 1648.9,574.7 1644.3,579.6 1639.8,583.1 1635.2,586.2 1630.7,589.3 1626.1,592.4 1621.6,595.2 1617.1,597.8 1612.5,600.1 1608.0,602.3 1603.5,603.8 1598.9,605.1 1594.4,606.3 1589.9,607.6 1585.4,608.9 1580.9,610.1 1576.3,611.2 1571.8,612.3 1567.3,613.2 1562.8,614.0 1558.3,614.7 1553.7,615.4 1549.2,616.1 1544.7,616.8 1540.2,617.4 1535.7,617.8 1531.2,618.3 1526.7,618.8 1522.1,619.4 1517.6,619.9 1513.1,620.1 1508.6,620.2 1504.1,620.4 1499.6,620.6 1495.0,620.6 1490.5,620.6 1486.0,620.5 1481.5,620.5 1477.0,620.5 1472.5,620.5 1467.9,620.6 1463.4,620.6 1458.9,620.7 1454.4,620.9 1449.9,620.8 1445.4,620.6 1440.8,620.5 1436.3,620.4 1431.8,620.3 1427.3,620.2 1422.8,620.3 1418.3,620.4 1413.7,620.4 1409.2,620.3 1404.7,620.2 1400.2,620.0 1395.7,619.6 1391.1,619.2 1386.6,618.3 1382.1,617.1 1377.5,615.7 1373.0,613.7 1368.4,611.5 1363.9,608.9 1359.3,606.9 1354.8,604.6 1350.2,602.2 1345.6,599.5 1341.0,596.5 1336.5,593.4 1331.9,590.4 1327.3,587.1 1322.7,582.8 1318.0,577.4" fill="#20cccc" stroke="#20cccc" stroke-width="0.4"/>
<polygon points="1322.4,552.1 1643.7,549.7 1643.5,574.7 1639.0,578.3 1634.4,581.5 1629.9,584.7 1625.4,587.9 1620.9,590.8 1616.3,593.5 1611.8,595.9 1607.3,598.1 1602.8,599.7 1598.3,601.0 1593.8,602.2 1589.3,603.6 1584.8,605.0 1580.3,606.2 1575.7,607.4 1571.2,608.6 1566.7,609.5 1562.2,610.3 1557.7,611.1 1553.2,611.8 1548.7,612.6 1544.2,613.3 1539.7,613.9 1535.2,614.4 1530.7,614.9 1526.2,615.4 1521.7,616.0 1517.2,616.5 1512.7,616.7 1508.2,616.9 1503.7,617.1 1499.2,617.3 1494.7,617.3 1490.2,617.2 1485.7,617.1 1481.2,617.1 1476.7,617.1 1472.2,617.1 1467.7,617.1 1463.2,617.2 1458.7,617.3 1454.2,617.4 1449.7,617.2 1445.2,617.1 1440.7,616.9 1436.2,616.8 1431.7,616.6 1427.2,616.5 1422.7,616.6 1418.2,616.6 1413.7,616.6 1409.2,616.5 1404.7,616.3 1400.2,616.0 1395.7,615.6 1391.2,615.2 1386.7,614.2 1382.1,612.9 1377.6,611.4 1373.1,609.4 1368.5,607.0 1364.0,604.4 1359.4,602.2 1354.9,599.8 1350.3,597.3 1345.8,594.4 1341.2,591.3 1336.6,588.1 1332.1,585.0 1327.5,581.5 1322.9,577.2" fill="#28d8bb" stroke="#28d8bb" stroke-width="0.4"/>
<polygon points="1328.3,552.0 1637.0,549.8 1636.8,574.8 1632.3,578.0 1627.8,581.5 1623.2,584.7 1618.7,587.6 1614.1,590.3 1609.6,592.7 1605.1,594.8 1600.5,596.2 1596.0,597.5 1591.5,599.0 1587.0,600.4 1582.4,601.8 1577.9,603.1 1573.4,604.3 1568.9,605.5 1564.4,606.4 1559.8,607.2 1555.3,608.0 1550.8,608.8 1546.3,609.6 1541.8,610.3 1537.3,610.8 1532.7,611.4 1528.2,611.9 1523.7,612.5 1519.2,613.1 1514.7,613.4 1510.2,613.6 1505.7,613.8 1501.1,614.0 1496.6,614.1 1492.1,614.0 1487.6,613.9 1483.1,613.9 1478.6,613.9 1474.0,613.9 1469.5,613.9 1465.0,613.9 1460.5,613.9 1456.0,614.0 1451.5,614.0 1446.9,613.8 1442.4,613.6 1437.9,613.4 1433.4,613.2 1428.9,613.0 1424.3,613.0 1419.8,613.0 1415.3,613.0 1410.8,612.9 1406.3,612.7 1401.7,612.4 1397.2,612.0 1392.7,611.5 1388.2,610.7 1383.6,609.3 1379.1,607.8 1374.5,605.9 1370.0,603.5 1365.4,600.8 1360.9,598.4 1356.3,595.9 1351.7,593.3 1347.1,590.4 1342.6,587.3 1338.0,583.8 1333.4,580.6 1328.8,577.0" fill="#34e4a7" stroke="#34e4a7" stroke-width="0.4"/>
<polygon points="1335.0,552.0 1630.6,549.8 1630.4,574.8 1625.9,578.3 1621.3,581.5 1616.8,584.5 1612.2,587.1 1607.7,589.6 1603.2,591.4 1598.6,592.9 1594.1,594.3 1589.6,595.8 1585.0,597.3 1580.5,598.8 1576.0,600.1 1571.4,601.3 1566.9,602.5 1562.4,603.4 1557.8,604.2 1553.3,605.1 1548.8,605.9 1544.3,606.7 1539.7,607.3 1535.2,607.9 1530.7,608.5 1526.2,609.1 1521.6,609.7 1517.1,610.3 1512.6,610.4 1508.1,610.6 1503.5,610.8 1499.0,611.1 1494.5,611.0 1490.0,610.9 1485.4,610.9 1480.9,610.8 1476.4,610.8 1471.9,610.8 1467.3,610.8 1462.8,610.8 1458.3,610.8 1453.8,610.9 1449.2,610.7 1444.7,610.5 1440.2,610.2 1435.6,610.0 1431.1,609.8 1426.6,609.6 1422.1,609.6 1417.5,609.6 1413.0,609.5 1408.5,609.3 1403.9,609.0 1399.4,608.6 1394.9,608.0 1390.3,607.5 1385.8,606.2 1381.2,604.7 1376.7,603.0 1372.1,600.6 1367.5,598.0 1363.0,595.1 1358.4,592.7 1353.8,590.0 1349.2,587.1 1344.6,584.0 1340.0,580.5 1335.4,577.0" fill="#43ed93" stroke="#43ed93" stroke-width="0.4"/>
<polygon points="1341.1,551.9 1624.9,549.9 1624.8,574.7 1620.3,578.0 1615.8,581.0 1611.3,583.7 1606.8,586.2 1602.3,587.9 1597.8,589.4 1593.3,590.9 1588.8,592.5 1584.3,594.1 1579.8,595.5 1575.3,596.9 1570.9,598.2 1566.4,599.3 1561.9,600.2 1557.4,601.1 1552.9,602.0 1548.4,602.8 1543.9,603.6 1539.5,604.3 1535.0,604.9 1530.5,605.5 1526.0,606.1 1521.5,606.7 1517.0,607.3 1512.6,607.5 1508.1,607.7 1503.6,607.9 1499.1,608.2 1494.6,608.1 1490.1,608.0 1485.7,608.0 1481.2,607.9 1476.7,607.9 1472.2,607.8 1467.7,607.8 1463.2,607.8 1458.7,607.8 1454.3,607.9 1449.8,607.7 1445.3,607.4 1440.8,607.2 1436.3,606.9 1431.8,606.7 1427.3,606.4 1422.9,606.4 1418.4,606.3 1413.9,606.2 1409.4,605.9 1404.9,605.6 1400.4,605.2 1395.9,604.7 1391.4,604.0 1386.9,603.0 1382.4,601.4 1377.9,599.7 1373.4,597.4 1368.8,594.8 1364.3,591.8 1359.8,589.3 1355.2,586.6 1350.7,583.7 1346.1,580.5 1341.6,577.1" fill="#53f57f" stroke="#53f57f" stroke-width="0.4"/>
<polygon points="1346.8,551.9 1619.3,549.9 1619.2,574.8 1614.6,577.8 1610.1,580.6 1605.6,583.0 1601.0,584.7 1596.5,586.3 1592.0,587.9 1587.4,589.6 1582.9,591.2 1578.4,592.7 1573.8,594.1 1569.3,595.4 1564.8,596.5 1560.3,597.5 1555.7,598.4 1551.2,599.3 1546.7,600.2 1542.2,601.0 1537.7,601.7 1533.1,602.3 1528.6,602.9 1524.1,603.6 1519.6,604.2 1515.0,604.6 1510.5,604.8 1506.0,605.0 1501.5,605.3 1497.0,605.4 1492.4,605.3 1487.9,605.2 1483.4,605.1 1478.9,605.1 1474.3,605.0 1469.8,605.0 1465.3,605.0 1460.8,605.0 1456.3,605.0 1451.7,604.9 1447.2,604.6 1442.7,604.3 1438.2,604.0 1433.6,603.7 1429.1,603.4 1424.6,603.3 1420.1,603.2 1415.5,603.1 1411.0,602.8 1406.5,602.5 1402.0,602.1 1397.4,601.5 1392.9,600.8 1388.3,600.0 1383.8,598.4 1379.2,596.6 1374.7,594.5 1370.1,591.8 1365.5,588.8 1361.0,585.9 1356.4,583.2 1351.8,580.2 1347.2,576.9" fill="#64f96d" stroke="#64f96d" stroke-width="0.4"/>
<polygon points="1352.4,551.8 1613.4,550.0 1613.3,575.0 1608.8,577.7 1604.3,579.9 1599.8,581.7 1595.3,583.3 1590.8,585.0 1586.3,586.7 1581.8,588.3 1577.4,589.9 1572.9,591.3 1568.4,592.6 1563.9,593.7 1559.4,594.7 1554.9,595.7 1550.5,596.6 1546.0,597.5 1541.5,598.3 1537.0,599.0 1532.5,599.6 1528.0,600.3 1523.6,600.9 1519.1,601.6 1514.6,602.0 1510.1,602.2 1505.7,602.4 1501.2,602.6 1496.7,602.8 1492.2,602.7 1487.7,602.6 1483.2,602.5 1478.8,602.4 1474.3,602.3 1469.8,602.3 1465.3,602.2 1460.8,602.2 1456.4,602.2 1451.9,602.1 1447.4,601.8 1442.9,601.5 1438.4,601.2 1433.9,600.9 1429.5,600.5 1425.0,600.3 1420.5,600.2 1416.0,600.1 1411.5,599.8 1407.0,599.4 1402.5,599.0 1398.1,598.4 1393.6,597.7 1389.1,596.9 1384.6,595.2 1380.0,593.5 1375.5,591.4 1371.0,588.7 1366.5,585.7 1361.9,582.6 1357.4,579.9 1352.9,576.8" fill="#75fb5e" stroke="#75fb5e" stroke-width="0.4"/>
<polygon points="1358.3,551.8 1607.7,550.0 1607.7,575.0 1603.1,577.0 1598.6,578.8 1594.1,580.5 1589.5,582.3 1585.0,584.1 1580.5,585.7 1576.0,587.3 1571.4,588.8 1566.9,590.1 1562.4,591.2 1557.9,592.2 1553.4,593.2 1548.8,594.2 1544.3,595.1 1539.8,595.9 1535.3,596.6 1530.8,597.2 1526.3,597.9 1521.7,598.6 1517.2,599.3 1512.7,599.5 1508.2,599.7 1503.7,599.9 1499.2,600.2 1494.7,600.2 1490.1,600.1 1485.6,600.0 1481.1,599.9 1476.6,599.8 1472.1,599.7 1467.5,599.7 1463.0,599.6 1458.5,599.6 1454.0,599.6 1449.5,599.3 1445.0,598.9 1440.4,598.6 1435.9,598.2 1431.4,597.9 1426.9,597.5 1422.3,597.4 1417.8,597.2 1413.3,597.0 1408.8,596.6 1404.3,596.1 1399.7,595.5 1395.2,594.8 1390.7,594.0 1386.1,592.6 1381.6,590.8 1377.0,588.8 1372.5,586.1 1367.9,583.1 1363.3,579.7 1358.7,576.9" fill="#84fc52" stroke="#84fc52" stroke-width="0.4"/>
<polygon points="1363.7,551.8 1600.3,550.0 1600.2,575.0 1595.7,576.7 1591.1,578.6 1586.6,580.5 1582.1,582.2 1577.5,583.9 1573.0,585.4 1568.4,586.9 1563.9,588.1 1559.4,589.2 1554.8,590.2 1550.3,591.2 1545.8,592.2 1541.2,593.1 1536.7,593.8 1532.2,594.5 1527.6,595.2 1523.1,595.9 1518.6,596.6 1514.0,597.0 1509.5,597.2 1505.0,597.4 1500.5,597.7 1495.9,597.8 1491.4,597.6 1486.9,597.5 1482.3,597.4 1477.8,597.4 1473.3,597.3 1468.7,597.2 1464.2,597.1 1459.7,597.1 1455.1,597.0 1450.6,596.8 1446.0,596.4 1441.5,596.0 1437.0,595.6 1432.4,595.3 1427.9,594.9 1423.4,594.6 1418.8,594.5 1414.3,594.2 1409.7,593.8 1405.2,593.3 1400.7,592.7 1396.1,591.9 1391.6,591.1 1387.0,589.8 1382.4,587.9 1377.9,585.9 1373.3,583.3 1368.7,580.2 1364.1,576.8" fill="#8efb4d" stroke="#8efb4d" stroke-width="0.4"/>
<polygon points="1368.1,551.7 1592.6,550.1 1592.5,575.0 1588.1,576.9 1583.6,578.8 1579.1,580.5 1574.6,582.1 1570.1,583.6 1565.7,585.0 1561.2,586.1 1556.7,587.2 1552.2,588.2 1547.8,589.2 1543.3,590.2 1538.8,591.0 1534.3,591.7 1529.9,592.4 1525.4,593.1 1520.9,593.8 1516.4,594.5 1512.0,594.7 1507.5,594.9 1503.0,595.2 1498.5,595.4 1494.1,595.4 1489.6,595.2 1485.1,595.1 1480.6,595.0 1476.2,594.9 1471.7,594.8 1467.2,594.8 1462.7,594.7 1458.3,594.6 1453.8,594.5 1449.3,594.2 1444.8,593.8 1440.4,593.4 1435.9,593.0 1431.4,592.6 1426.9,592.2 1422.4,591.9 1418.0,591.7 1413.5,591.4 1409.0,590.9 1404.5,590.4 1400.0,589.7 1395.5,588.9 1391.0,588.0 1386.5,586.6 1382.0,584.7 1377.5,582.6 1373.0,579.9 1368.5,576.7" fill="#98fa48" stroke="#98fa48" stroke-width="0.4"/>
<polygon points="1372.7,551.7 1585.9,550.2 1585.9,575.0 1581.4,576.9 1576.8,578.6 1572.3,580.3 1567.8,581.8 1563.2,583.0 1558.7,584.2 1554.2,585.3 1549.7,586.4 1545.2,587.4 1540.6,588.3 1536.1,589.1 1531.6,589.8 1527.1,590.5 1522.6,591.3 1518.0,592.0 1513.5,592.3 1509.0,592.6 1504.5,592.8 1500.0,593.1 1495.4,593.1 1490.9,593.0 1486.4,592.9 1481.9,592.8 1477.3,592.7 1472.8,592.6 1468.3,592.5 1463.8,592.4 1459.2,592.3 1454.7,592.2 1450.2,591.9 1445.7,591.5 1441.1,591.0 1436.6,590.6 1432.1,590.1 1427.6,589.6 1423.0,589.4 1418.5,589.1 1414.0,588.8 1409.5,588.3 1404.9,587.7 1400.4,587.0 1395.9,586.1 1391.3,585.2 1386.8,583.7 1382.2,581.7 1377.7,579.6 1373.1,576.8" fill="#a2f943" stroke="#a2f943" stroke-width="0.4"/>
<polygon points="1377.3,551.7 1579.3,550.2 1579.2,575.1 1574.6,576.9 1570.1,578.5 1565.5,579.9 1560.9,581.2 1556.3,582.4 1551.8,583.5 1547.2,584.6 1542.6,585.6 1538.0,586.4 1533.5,587.2 1528.9,588.0 1524.3,588.8 1519.7,589.5 1515.2,590.0 1510.6,590.3 1506.0,590.5 1501.4,590.8 1496.9,591.0 1492.3,590.8 1487.7,590.7 1483.1,590.6 1478.6,590.5 1474.0,590.4 1469.4,590.2 1464.8,590.1 1460.3,590.0 1455.7,589.9 1451.1,589.7 1446.5,589.2 1441.9,588.7 1437.4,588.3 1432.8,587.8 1428.2,587.3 1423.6,586.9 1419.0,586.6 1414.5,586.3 1409.9,585.7 1405.3,585.1 1400.7,584.4 1396.1,583.5 1391.5,582.5 1386.9,581.0 1382.3,578.9 1377.7,576.6" fill="#b2f53d" stroke="#b2f53d" stroke-width="0.4"/>
<polygon points="1383.2,551.6 1572.6,550.2 1572.6,575.1 1568.1,576.8 1563.6,578.1 1559.1,579.3 1554.6,580.5 1550.1,581.6 1545.6,582.7 1541.1,583.7 1536.6,584.5 1532.1,585.3 1527.6,586.0 1523.1,586.8 1518.6,587.5 1514.1,588.0 1509.6,588.2 1505.1,588.5 1500.6,588.7 1496.1,588.9 1491.7,588.7 1487.2,588.6 1482.7,588.5 1478.2,588.4 1473.7,588.2 1469.2,588.1 1464.7,588.0 1460.2,587.8 1455.7,587.7 1451.2,587.4 1446.7,587.0 1442.2,586.5 1437.7,586.0 1433.2,585.5 1428.7,584.9 1424.2,584.6 1419.7,584.2 1415.2,583.9 1410.7,583.3 1406.2,582.7 1401.7,582.0 1397.1,581.0 1392.6,580.0 1388.1,578.8 1383.6,576.7" fill="#c9ee36" stroke="#c9ee36" stroke-width="0.4"/>
<polygon points="1388.9,551.6 1565.4,550.3 1565.4,575.2 1560.9,576.5 1556.4,577.8 1551.9,578.9 1547.3,580.1 1542.8,581.2 1538.3,582.0 1533.8,582.8 1529.3,583.6 1524.8,584.4 1520.3,585.2 1515.7,585.8 1511.2,586.1 1506.7,586.3 1502.2,586.6 1497.7,586.9 1493.2,586.7 1488.7,586.6 1484.2,586.5 1479.6,586.3 1475.1,586.2 1470.6,586.0 1466.1,585.9 1461.6,585.8 1457.1,585.6 1452.5,585.4 1448.0,584.9 1443.5,584.4 1439.0,583.9 1434.5,583.4 1429.9,582.8 1425.4,582.3 1420.9,582.0 1416.4,581.6 1411.9,581.1 1407.3,580.4 1402.8,579.7 1398.3,578.7 1393.7,577.7 1389.2,576.6" fill="#d8e732" stroke="#d8e732" stroke-width="0.4"/>
<polygon points="1398.9,551.5 1557.4,550.4 1557.5,575.3 1552.9,576.5 1548.4,577.7 1543.9,578.8 1539.4,579.7 1534.9,580.6 1530.3,581.4 1525.8,582.2 1521.3,583.0 1516.8,583.8 1512.3,584.0 1507.8,584.3 1503.2,584.6 1498.7,584.8 1494.2,584.8 1489.7,584.6 1485.2,584.5 1480.7,584.4 1476.1,584.2 1471.6,584.1 1467.1,583.9 1462.6,583.7 1458.1,583.6 1453.5,583.4 1449.0,583.0 1444.5,582.4 1440.0,581.9 1435.4,581.3 1430.9,580.7 1426.4,580.2 1421.9,579.8 1417.3,579.4 1412.8,578.9 1408.3,578.2 1403.7,577.4 1399.2,576.5" fill="#e4e030" stroke="#e4e030" stroke-width="0.4"/>
<polygon points="1411.4,551.4 1549.2,550.4 1549.3,575.4 1544.7,576.6 1540.1,577.6 1535.5,578.5 1530.9,579.3 1526.4,580.2 1521.8,581.0 1517.2,581.8 1512.6,582.1 1508.0,582.3 1503.5,582.6 1498.9,582.9 1494.3,582.9 1489.7,582.7 1485.1,582.6 1480.6,582.4 1476.0,582.3 1471.4,582.1 1466.8,581.9 1462.2,581.7 1457.6,581.6 1453.1,581.4 1448.5,580.9 1443.9,580.3 1439.3,579.7 1434.7,579.1 1430.1,578.5 1425.5,577.9 1420.9,577.5 1416.3,577.0 1411.7,576.4" fill="#ead72e" stroke="#ead72e" stroke-width="0.4"/>
<polygon points="1429.1,551.3 1541.0,550.5 1541.1,575.4 1536.4,576.3 1531.8,577.2 1527.1,578.1 1522.5,579.0 1517.8,579.8 1513.2,580.2 1508.5,580.4 1503.9,580.7 1499.2,581.0 1494.6,581.0 1489.9,580.8 1485.3,580.7 1480.6,580.6 1476.0,580.4 1471.3,580.2 1466.7,580.0 1462.0,579.8 1457.4,579.6 1452.7,579.4 1448.1,578.8 1443.4,578.2 1438.7,577.6 1434.1,577.0 1429.4,576.3" fill="#f1cf2c" stroke="#f1cf2c" stroke-width="0.4"/>
<polygon points="1442.5,551.2 1531.0,550.5 1531.1,575.5 1526.4,576.4 1521.8,577.2 1517.1,578.1 1512.5,578.4 1507.8,578.7 1503.2,579.0 1498.6,579.3 1493.9,579.2 1489.3,579.0 1484.6,578.9 1480.0,578.7 1475.3,578.5 1470.7,578.3 1466.0,578.1 1461.4,577.9 1456.7,577.7 1452.0,577.4 1447.4,576.8 1442.7,576.1" fill="#fbc928" stroke="#fbc928" stroke-width="0.4"/>
<polygon points="1459.7,551.1 1521.0,550.6 1521.1,575.5 1516.4,576.4 1511.7,576.7 1507.0,577.0 1502.3,577.3 1497.6,577.5 1492.9,577.4 1488.2,577.2 1483.4,577.1 1478.7,576.9 1474.0,576.7 1469.3,576.5 1464.6,576.2 1459.9,576.0" fill="#fcbd28" stroke="#fcbd28" stroke-width="0.4"/>
<polygon points="1495.1,550.8 1499.7,550.8 1499.8,575.7 1497.5,575.8 1495.2,575.7" fill="#fcaf28" stroke="#fcaf28" stroke-width="0.4"/><line x1="1257" y1="552.4" x2="1773.5" y2="548.5" stroke="#8a0000" stroke-width="1.3"/><path d="M1394.2,454.5 L1597,452 L1717.8,707.6 L1383.3,710.5 Z" fill="none" stroke="#6e6e6e" stroke-width="1" stroke-dasharray="5,5"/><line x1="1835" y1="185" x2="1835" y2="211" stroke="#5cb85c" stroke-width="1.6"/><line x1="1833" y1="259" x2="1833" y2="280" stroke="#5cb85c" stroke-width="1.6"/><line x1="1862.5" y1="233" x2="1881" y2="233" stroke="#f06060" stroke-width="1.6"/><polygon points="1806,209 1814,211.5 1814,259 1806,255" fill="#c0a0a8" stroke="#909098" stroke-width="0.8"/><line x1="1787" y1="233" x2="1814" y2="233" stroke="#f06060" stroke-width="1.6"/><polygon points="1808,209 1856,207.5 1862,211 1814,211.5" fill="#9cbc9c" stroke="#909098" stroke-width="0.8"/><rect x="1814" y="211" width="48.3" height="48" fill="#cdcdf6" stroke="#9a9aae" stroke-width="1"/><line x1="1834" y1="211" x2="1834" y2="259" stroke="#b0c8c8" stroke-width="1"/><line x1="1814" y1="233" x2="1862" y2="233" stroke="#e8b0c0" stroke-width="0.8"/><text x="1819.5" y="236.5" font-family="Liberation Mono" font-size="11" fill="#4a4a4a" stroke="#666" stroke-width="0.2" letter-spacing="1.1">Front</text><text x="1893" y="234" text-anchor="middle" font-family="Liberation Sans" font-size="10" fill="#f06060">X</text><text x="1834" y="291" text-anchor="middle" font-family="Liberation Sans" font-size="10" fill="#5cb85c">Z</text></g></svg>

<!-- STAGE BAR -->
<div class="a" style="left:309px;top:1092px;width:1606px;height:42px;background:#f0f0f0;border-bottom:1px solid #a8a8a8"></div><div class="a" style="left:1759px;top:1113px;width:134px;height:20px;background:#fff;border:1.5px solid #000;border-bottom-width:1px"></div><svg width="1920" height="1160" style="left:0;top:0"><rect x="309.2" y="1093" width="19.5" height="17.7" fill="#f0f0f0"/><path d="M327.8,1093 V1109.8 H309.2" fill="none" stroke="#a0a0a0" stroke-width="1.8"/><rect x="330.1" y="1093" width="19.5" height="17.7" fill="#f0f0f0"/><path d="M348.70000000000005,1093 V1109.8 H330.1" fill="none" stroke="#a0a0a0" stroke-width="1.8"/><rect x="351.2" y="1093" width="19.5" height="17.7" fill="#f0f0f0"/><path d="M369.8,1093 V1109.8 H351.2" fill="none" stroke="#a0a0a0" stroke-width="1.8"/><rect x="372.1" y="1093" width="19.5" height="17.7" fill="#f0f0f0"/><path d="M390.70000000000005,1093 V1109.8 H372.1" fill="none" stroke="#a0a0a0" stroke-width="1.8"/><rect x="393.1" y="1093" width="19.5" height="17.7" fill="#f0f0f0"/><path d="M411.70000000000005,1093 V1109.8 H393.1" fill="none" stroke="#a0a0a0" stroke-width="1.8"/><rect x="315" y="1097" width="1.4" height="9" fill="#000"/><polygon points="322.3,1097 322.3,1106 317.2,1101.5" fill="#000"/><polygon points="342.2,1097 342.2,1106 337,1101.5" fill="#000"/><text x="361" y="1106.2" text-anchor="middle" font-family="Liberation Sans" font-weight="bold" font-size="11" fill="#000">#</text><polygon points="379,1097 379,1106 384.2,1101.5" fill="#a0a0a0"/><polygon points="399,1097 399,1106 404.2,1101.5" fill="#000"/><rect x="405.2" y="1097" width="1.4" height="9" fill="#000"/><polygon points="1052.4,1093 1130.6,1093 1122.3,1109.5 1060.7,1109.5" fill="#fff"/><line x1="414.3" y1="1093" x2="422.6" y2="1109.5" stroke="#000" stroke-width="1.1"/><line x1="422.6" y1="1109.2" x2="476.29999999999995" y2="1109.2" stroke="#a0a0a0" stroke-width="1.3"/><line x1="476.29999999999995" y1="1109.5" x2="481.0" y2="1101" stroke="#000" stroke-width="1.1"/><line x1="477.4" y1="1093" x2="485.7" y2="1109.5" stroke="#000" stroke-width="1.1"/><line x1="485.7" y1="1109.2" x2="539.4" y2="1109.2" stroke="#a0a0a0" stroke-width="1.3"/><line x1="539.4" y1="1109.5" x2="544.1" y2="1101" stroke="#000" stroke-width="1.1"/><line x1="540.5" y1="1093" x2="548.8" y2="1109.5" stroke="#000" stroke-width="1.1"/><line x1="548.8" y1="1109.2" x2="602.5" y2="1109.2" stroke="#a0a0a0" stroke-width="1.3"/><line x1="602.5" y1="1109.5" x2="607.2" y2="1101" stroke="#000" stroke-width="1.1"/><line x1="603.6" y1="1093" x2="611.9" y2="1109.5" stroke="#000" stroke-width="1.1"/><line x1="611.9" y1="1109.2" x2="665.6" y2="1109.2" stroke="#a0a0a0" stroke-width="1.3"/><line x1="665.6" y1="1109.5" x2="670.3000000000001" y2="1101" stroke="#000" stroke-width="1.1"/><line x1="666.7" y1="1093" x2="675.0" y2="1109.5" stroke="#000" stroke-width="1.1"/><line x1="675.0" y1="1109.2" x2="728.6999999999999" y2="1109.2" stroke="#a0a0a0" stroke-width="1.3"/><line x1="728.6999999999999" y1="1109.5" x2="733.4" y2="1101" stroke="#000" stroke-width="1.1"/><line x1="729.8" y1="1093" x2="738.0999999999999" y2="1109.5" stroke="#000" stroke-width="1.1"/><line x1="738.0999999999999" y1="1109.2" x2="791.8" y2="1109.2" stroke="#a0a0a0" stroke-width="1.3"/><line x1="791.8" y1="1109.5" x2="796.5" y2="1101" stroke="#000" stroke-width="1.1"/><line x1="792.9" y1="1093" x2="801.1999999999999" y2="1109.5" stroke="#000" stroke-width="1.1"/><line x1="801.1999999999999" y1="1109.2" x2="854.9" y2="1109.2" stroke="#a0a0a0" stroke-width="1.3"/><line x1="854.9" y1="1109.5" x2="859.6" y2="1101" stroke="#000" stroke-width="1.1"/><line x1="856" y1="1093" x2="864.3" y2="1109.5" stroke="#000" stroke-width="1.1"/><line x1="864.3" y1="1109.2" x2="918.0" y2="1109.2" stroke="#a0a0a0" stroke-width="1.3"/><line x1="918.0" y1="1109.5" x2="922.7" y2="1101" stroke="#000" stroke-width="1.1"/><line x1="919.1" y1="1093" x2="927.4" y2="1109.5" stroke="#000" stroke-width="1.1"/><line x1="927.4" y1="1109.2" x2="980.3" y2="1109.2" stroke="#a0a0a0" stroke-width="1.3"/><line x1="980.3" y1="1109.5" x2="985.0" y2="1101" stroke="#000" stroke-width="1.1"/><line x1="981.4" y1="1093" x2="989.6999999999999" y2="1109.5" stroke="#000" stroke-width="1.1"/><line x1="989.6999999999999" y1="1109.2" x2="1051.3000000000002" y2="1109.2" stroke="#a0a0a0" stroke-width="1.3"/><line x1="1051.3000000000002" y1="1109.5" x2="1056.0" y2="1101" stroke="#000" stroke-width="1.1"/><line x1="1052.4" y1="1093" x2="1060.7" y2="1109.5" stroke="#000" stroke-width="1.1"/><line x1="1060.7" y1="1109.2" x2="1122.3" y2="1109.2" stroke="#a0a0a0" stroke-width="1.3"/><line x1="1122.3" y1="1109.5" x2="1130.6" y2="1093" stroke="#000" stroke-width="1.1"/><line x1="309" y1="1092.5" x2="1915" y2="1092.5" stroke="#000" stroke-width="1.3"/></svg><div class="t" style="left:427.5px;top:1096px;font-size:11px;letter-spacing:0.75px">Stage 1</div><div class="t" style="left:490.6px;top:1096px;font-size:11px;letter-spacing:0.75px">Stage 2</div><div class="t" style="left:553.7px;top:1096px;font-size:11px;letter-spacing:0.75px">Stage 3</div><div class="t" style="left:616.8px;top:1096px;font-size:11px;letter-spacing:0.75px">Stage 4</div><div class="t" style="left:679.9px;top:1096px;font-size:11px;letter-spacing:0.75px">Stage 5</div><div class="t" style="left:743.0px;top:1096px;font-size:11px;letter-spacing:0.75px">Stage 6</div><div class="t" style="left:806.1px;top:1096px;font-size:11px;letter-spacing:0.75px">Stage 7</div><div class="t" style="left:869.2px;top:1096px;font-size:11px;letter-spacing:0.75px">Stage 8</div><div class="t" style="left:932.3px;top:1096px;font-size:11px;letter-spacing:0.75px">Stage 9</div><div class="t" style="left:995.6px;top:1096px;font-size:11px;letter-spacing:0.75px">Stage 10</div><div class="t" style="left:1063.5px;top:1096px;font-size:11px;letter-spacing:1.4px;font-weight:bold">Stage 11</div>

<!-- STATUS BAR -->
<div class="a" style="left:0;top:1140px;width:1920px;height:20px;background:#fff"></div><div class="t" style="left:4px;top:1145px;font-size:12.3px;color:#1a1a1a;transform:scaleX(0.89);transform-origin:0 0">Ready</div><div class="a" style="left:1531px;top:1142px;width:98px;height:17px;background:#cce4f7"></div><div class="a" style="left:1631px;top:1142px;width:36px;height:17px;background:#cce4f7"></div><div class="a" style="left:1699px;top:1142px;width:46px;height:17px;background:#cce4f7"></div><div class="t" style="left:1539px;top:1145px;font-size:11.3px;color:#1a1a1a">MAX DATATIPS</div><div class="t" style="left:1634px;top:1145px;font-size:11.3px;color:#1a1a1a">SNAP</div><div class="t" style="left:1670px;top:1145px;font-size:11.3px;color:#a0a0a0">GRID</div><div class="t" style="left:1703px;top:1145px;font-size:11.3px;color:#1a1a1a">ORTHO</div><div class="t" style="left:1749px;top:1145px;font-size:11.3px;color:#a0a0a0">OSNAP</div><div class="t" style="left:1821px;top:1145px;font-size:11.3px;color:#1a1a1a;white-space:pre">3.317,  54.204</div>

</body></html>
